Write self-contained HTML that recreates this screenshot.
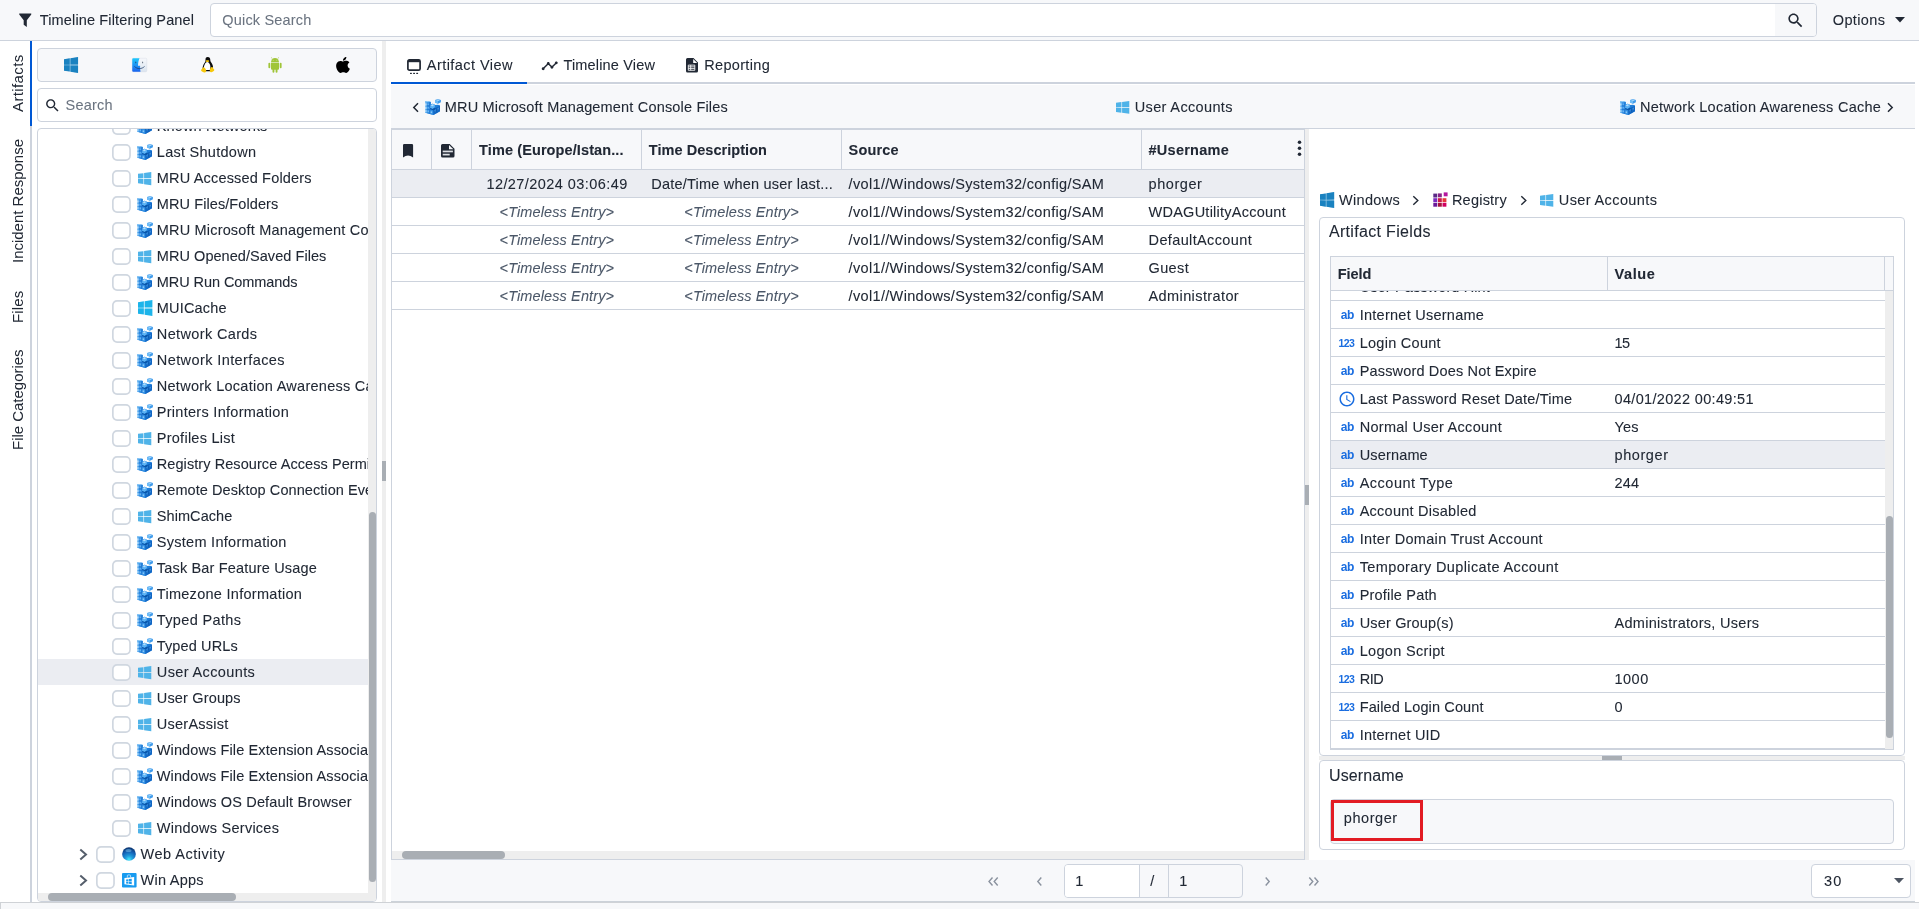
<!DOCTYPE html>
<html lang="en"><head><meta charset="utf-8"><title>Timeline</title>
<style>
*{box-sizing:border-box}
html,body{margin:0;padding:0}
body{will-change:transform;width:1919px;height:909px;overflow:hidden;background:#fff;position:relative;font-family:"Liberation Sans",sans-serif;font-size:14.5px;color:#212834}
.a{position:absolute}
.ic{position:absolute;display:block;overflow:visible}
.t{position:absolute;white-space:nowrap;line-height:20px;height:20px;-webkit-text-stroke:0.080px #212834}
.ph,.it{-webkit-text-stroke:0.060px currentColor}
.b{font-weight:bold}
.box{position:absolute;border:1px solid #cdd3dd;border-radius:4px}
.cb{position:absolute;width:18.900px;height:16.900px;border:1.800px solid #d0d6df;border-radius:5px;background:#fff}
.row{position:absolute;left:0;width:330px;height:26px;overflow:hidden}
.hl{position:absolute;height:1px;background:#cdd3dd}
.vl{position:absolute;width:1px;background:#cdd3dd}
.it{font-style:italic;color:#4b5768}
.ty{position:absolute;color:#1a6de0;font-weight:bold;font-size:12px;line-height:20px;height:20px;letter-spacing:-0.350px;white-space:nowrap}
.vt{position:absolute;left:1.500px;width:32px;font-size:15px;writing-mode:vertical-rl;transform:rotate(180deg);text-align:center;line-height:31px;white-space:nowrap}
.ph{color:#6b7480}
</style></head><body>

<div class="a" style="left:0;top:0;width:1919px;height:41px;background:#f7f8fa;border-bottom:1px solid #cdd3dd"></div>
<svg class="ic" style="left:19px;top:12.500px" width="12.500" height="14.500" viewBox="0 0 16 18"><path d="M0.300 0.500h15.400v1.200L10 9V17.600L6 14.600V9L0.300 1.700z" fill="#212834"/></svg>
<div class="t" style="left:39.8px;top:10px;letter-spacing:0.14px;">Timeline Filtering Panel</div>
<div class="box" style="left:210px;top:3px;width:1607px;height:34px;background:#fff;overflow:hidden"><div class="a" style="right:0;top:0;width:41px;height:32px;background:#f7f8fa"></div></div>
<div class="t ph" style="left:222.3px;top:10px;letter-spacing:0.178px;">Quick Search</div>
<svg class="ic" style="left:1786px;top:10.5px" width="19" height="19" viewBox="0 0 24 24"><path d="M15.500 14h-.790l-.280-.270C15.410 12.590 16 11.110 16 9.500 16 5.910 13.090 3 9.500 3S3 5.910 3 9.500 5.910 16 9.500 16c1.610 0 3.090-.590 4.230-1.570l.270.280v.790l5 4.990L20.490 19l-4.990-5zm-6 0C7.010 14 5 11.990 5 9.500S7.010 5 9.500 5 14 7.010 14 9.500 11.990 14 9.500 14z" fill="#212834"/></svg>
<div class="t" style="left:1832.8px;top:10px;letter-spacing:0.353px;">Options</div>
<svg class="ic" style="left:1895px;top:17px" width="10" height="5.500" viewBox="0 0 10 5.500"><path d="M0 0h10L5 5.500z" fill="#212834"/></svg>
<div class="a" style="left:30px;top:41px;width:2px;height:861px;background:#cdd3dd"></div>
<div class="a" style="left:30px;top:41px;width:2px;height:85px;background:#0058d4"></div>
<div class="vt" style="top:41px;height:85px;letter-spacing:0.389px">Artifacts</div>
<div class="vt" style="top:126px;height:151px;letter-spacing:-0.016px">Incident Response</div>
<div class="vt" style="top:277px;height:60px;letter-spacing:0.157px">Files</div>
<div class="vt" style="top:337px;height:126px;letter-spacing:-0.021px">File Categories</div>
<div class="box" style="left:37px;top:48px;width:340px;height:34px;background:#f7f8fa"></div>
<svg class="ic " style="left:63.9px;top:56.9px" width="14.2" height="16" viewBox="0 0 88 88" preserveAspectRatio="none"><path fill="#a3cfe8" d="M1 13.200L86.500 1V86.600L1 74.700z"/><path fill="#1a82c0" d="M0 12.402l35.687-4.86.016 34.423-35.67.203zm35.67 33.529l.028 34.453L.028 75.48.026 45.7zm4.326-39.025L87.314 0v41.527l-47.318.376zm47.329 39.349l-.011 41.34-47.318-6.678-.066-34.739z"/></svg>
<svg class="ic" style="left:131.5px;top:58px" width="15" height="14" viewBox="0 0 30 28"><defs><linearGradient id="fg" x1="0" y1="0" x2="0" y2="1"><stop offset="0" stop-color="#1ec8fb"/><stop offset="1" stop-color="#1a63ee"/></linearGradient><linearGradient id="fw" x1="0" y1="0" x2="0" y2="1"><stop offset="0" stop-color="#f6f8fb"/><stop offset="1" stop-color="#dbe5ef"/></linearGradient></defs><rect x="0.5" y="0.5" width="29" height="27" rx="2" fill="url(#fw)" stroke="#c9d1da" stroke-width="0.6"/><path d="M2.5 0.5H15c-2 4.5-2.8 9.5-3 15h4.2c-0.2 4 0 8 0.8 12H2.5a2 2 0 0 1-2-2V2.500a2 2 0 0 1 2-2z" fill="url(#fg)"/><rect x="6.8" y="7" width="1.6" height="3.6" rx="0.8" fill="#1c3a66"/><rect x="20.6" y="7" width="1.6" height="3.6" rx="0.8" fill="#3b4a5c"/><path d="M5.5 17.500c5 5 14 5 19 0" fill="none" stroke="#1c3a66" stroke-width="1.5" stroke-linecap="round"/></svg>
<svg class="ic" style="left:200.5px;top:56.8px" width="13.400" height="15.800" viewBox="0 0 13.400 15.800"><path d="M6.700 0.100C5 0.100 4.400 1.400 4.500 3c0.100 1.300-0.400 2-1.200 3.200C2.200 7.900 1.500 9.800 1.600 12.200L3.500 14.300H9.500L11.800 12.500c0.600-2 0.200-4.300-0.900-6.100C10 5 9.300 4.300 9.300 3 9.300 1.300 8.500 0.100 6.700 0.100z" fill="#0c0c0c"/><path d="M6.300 5C5 5 4.300 6.200 3.700 7.500 2.900 9.200 2.500 11.400 3 13h5.800c0.800-2 0.800-3.800 0.100-5.500C8.300 6.100 7.500 5 6.300 5z" fill="#fff"/><path d="M5 3.500c0.700-0.500 2.200-0.500 2.900 0 0.400 0.300 0.200 0.900-0.200 1.200-0.700 0.500-1.800 0.500-2.500 0-0.400-0.300-0.600-0.900-0.200-1.200z" fill="#f7c80a"/><path d="M0.100 13.600c-0.300-0.900 0.600-1.100 1-1.800 0.500-0.800 0.800-1.700 1.800-1.500 0.900 0.200 1.700 1.800 2.200 2.700 0.500 1.100-0.200 2.300-1.400 2.400-1.200 0.100-3.200-0.700-3.600-1.800z" fill="#f7c80a"/><path d="M13.300 13.200c0.300-0.800-0.600-1.200-1-1.800-0.400-0.600-0.300-1.300-1.200-1.400-1-0.100-1.700 0.700-2 1.900-0.200 1-0.700 2.500 0.400 3.100 0.900 0.600 1.800-0.100 2.500-0.600 0.600-0.400 1.100-0.600 1.300-1.200z" fill="#f7c80a"/></svg>
<svg class="ic" style="left:268px;top:57px" width="14" height="16" viewBox="0 0 28 32"><path d="M6 10.500a8 8.500 0 0 1 16 0z" fill="#a0c538"/><path d="M8.300 3.200L6.800 0.800M19.700 3.200L21.200 0.800" stroke="#a0c538" stroke-width="0.900" stroke-linecap="round"/><circle cx="10.400" cy="6.400" r="0.900" fill="#d8ea9d"/><circle cx="17.600" cy="6.400" r="0.900" fill="#d8ea9d"/><path d="M6 11.700h16v11.800a2 2 0 0 1-2 2H8a2 2 0 0 1-2-2z" fill="#a0c538"/><rect x="0.800" y="11.400" width="3.800" height="11" rx="1.900" fill="#a0c538"/><rect x="23.400" y="11.400" width="3.800" height="11" rx="1.900" fill="#a0c538"/><rect x="9" y="22" width="3.800" height="9.600" rx="1.900" fill="#a0c538"/><rect x="15.200" y="22" width="3.800" height="9.600" rx="1.900" fill="#a0c538"/></svg>
<svg class="ic" style="left:336px;top:57px" width="14" height="16" viewBox="2 0 20 24" preserveAspectRatio="none"><path d="M12.152 6.896c-.948 0-2.415-1.078-3.960-1.040-2.040.027-3.910 1.183-4.961 3.014-2.117 3.675-.546 9.103 1.519 12.090 1.013 1.454 2.208 3.090 3.792 3.039 1.520-.065 2.090-.987 3.935-.987 1.831 0 2.350.987 3.960.948 1.637-.026 2.676-1.480 3.676-2.948 1.156-1.688 1.636-3.325 1.662-3.415-.039-.013-3.182-1.221-3.220-4.857-.026-3.040 2.480-4.494 2.597-4.559-1.429-2.090-3.623-2.324-4.390-2.376-2-.156-3.675 1.090-4.610 1.090zM15.530 3.830c.843-1.012 1.400-2.427 1.245-3.830-1.207.052-2.662.805-3.532 1.818-.780.896-1.454 2.338-1.273 3.714 1.338.104 2.715-.688 3.559-1.701" fill="#000"/></svg>
<div class="box" style="left:37px;top:88px;width:340px;height:34px;background:#fff"></div>
<svg class="ic" style="left:43.5px;top:96.5px" width="17" height="17" viewBox="0 0 24 24"><path d="M15.500 14h-.790l-.280-.270C15.410 12.590 16 11.110 16 9.500 16 5.910 13.090 3 9.500 3S3 5.910 3 9.500 5.910 16 9.500 16c1.610 0 3.090-.590 4.230-1.570l.270.280v.790l5 4.990L20.490 19l-4.990-5zm-6 0C7.010 14 5 11.990 5 9.500S7.010 5 9.500 5 14 7.010 14 9.500 11.990 14 9.500 14z" fill="#212834"/></svg>
<div class="t ph" style="left:65.6px;top:95px;letter-spacing:0.209px;">Search</div>
<div class="box" style="left:37px;top:128px;width:340px;height:774px;background:#fff;overflow:hidden">
<div class="row" style="top:-16px;"><svg class="ic" style="left:74px;top:4.9px" width="18.900" height="16.900" viewBox="0 0 18.900 16.900"><rect x="0.850" y="0.850" width="17.200" height="15.200" rx="4.200" fill="#fff" stroke="#d0d7e0" stroke-width="1.700"/></svg><svg class="ic" style="left:99px;top:5px" width="16" height="16" viewBox="0 0 16 16"><polygon points="0.100,2.600 2.900,2.100 6,2.900 6,5.300 7.800,4.700 10.500,5.900 13,5.700 15,6.600 15,12.300 8.400,16 0.100,13.700" fill="#1f7fda"/><polygon points="0.100,2.600 1.700,3.200 1.700,14.100 0.100,13.700" fill="#7cc2f7"/><polygon points="1.700,3.200 6,2.900 6,8.800 8.400,10.200 8.400,16 1.700,14.100" fill="#338fe3"/><polygon points="8.400,10.200 15,6.600 15,12.300 8.400,16" fill="#1268c6"/><polygon points="0.100,2.600 2.900,2.100 6,2.900 1.700,3.200" fill="#9ad2fa"/><polygon points="4.900,6.200 7.700,4.700 9.900,5.900 9.900,8.400 7.600,10 4.900,8.700" fill="#5cb3f5"/><polygon points="5.500,6.200 7.600,5.200 9.200,6 7.400,7.200" fill="#b5defc"/><polygon points="4.900,8.700 7.600,10 9.900,8.400 10.900,9.700 8.400,11.400 5.400,10.300" fill="#0a55a8"/><polygon points="10,1.100 13,0 15.900,0.900 15.900,3.300 13,4.700 10,3.600" fill="#3f9aea"/><polygon points="10.500,1.200 13,0.400 15.200,1.100 13,2" fill="#b5defc"/><polygon points="10,1.100 13,2 13,4.700 10,3.600" fill="#6dbcf7"/><rect x="0.400" y="4.400" width="1" height="2.200" fill="#eaf6ff"/><rect x="0.400" y="7.800" width="1" height="2.200" fill="#d9eefe"/><rect x="0.400" y="11.100" width="1" height="2" fill="#c3e3fb"/><rect x="2.500" y="4.500" width="1.400" height="1.600" fill="#5fb0f2"/><rect x="2.500" y="8" width="1.400" height="1.600" fill="#5fb0f2"/><rect x="2.500" y="11.500" width="1.400" height="1.600" fill="#6fbbf5"/><rect x="5.600" y="12.400" width="1.500" height="1.700" fill="#86c8f8"/><path d="M1.700 6.900H5.500M1.700 10.400H6.500M4.700 3.100V8.600M4.700 10.400V15" stroke="#1566c4" stroke-width="0.500" fill="none"/><polygon points="9.400,11.200 11,10.300 11,12.200 9.400,13.100" fill="#3f94e4"/><polygon points="12.300,9.500 14,8.600 14,10.500 12.300,11.400" fill="#3f94e4"/><path d="M11.700 8.400V14.100M8.400 13L15 9.400" stroke="#0a55a8" stroke-width="0.450" fill="none"/></svg><div class="t" style="left:118.8px;top:3px;letter-spacing:0.132px;">Known Networks</div></div>
<div class="row" style="top:10px;"><svg class="ic" style="left:74px;top:4.9px" width="18.900" height="16.900" viewBox="0 0 18.900 16.900"><rect x="0.850" y="0.850" width="17.200" height="15.200" rx="4.200" fill="#fff" stroke="#d0d7e0" stroke-width="1.700"/></svg><svg class="ic" style="left:99px;top:5px" width="16" height="16" viewBox="0 0 16 16"><polygon points="0.100,2.600 2.900,2.100 6,2.900 6,5.300 7.800,4.700 10.500,5.900 13,5.700 15,6.600 15,12.300 8.400,16 0.100,13.700" fill="#1f7fda"/><polygon points="0.100,2.600 1.700,3.200 1.700,14.100 0.100,13.700" fill="#7cc2f7"/><polygon points="1.700,3.200 6,2.900 6,8.800 8.400,10.200 8.400,16 1.700,14.100" fill="#338fe3"/><polygon points="8.400,10.200 15,6.600 15,12.300 8.400,16" fill="#1268c6"/><polygon points="0.100,2.600 2.900,2.100 6,2.900 1.700,3.200" fill="#9ad2fa"/><polygon points="4.900,6.200 7.700,4.700 9.900,5.900 9.900,8.400 7.600,10 4.900,8.700" fill="#5cb3f5"/><polygon points="5.500,6.200 7.600,5.200 9.200,6 7.400,7.200" fill="#b5defc"/><polygon points="4.900,8.700 7.600,10 9.900,8.400 10.900,9.700 8.400,11.400 5.400,10.300" fill="#0a55a8"/><polygon points="10,1.100 13,0 15.900,0.900 15.900,3.300 13,4.700 10,3.600" fill="#3f9aea"/><polygon points="10.500,1.200 13,0.400 15.200,1.100 13,2" fill="#b5defc"/><polygon points="10,1.100 13,2 13,4.700 10,3.600" fill="#6dbcf7"/><rect x="0.400" y="4.400" width="1" height="2.200" fill="#eaf6ff"/><rect x="0.400" y="7.800" width="1" height="2.200" fill="#d9eefe"/><rect x="0.400" y="11.100" width="1" height="2" fill="#c3e3fb"/><rect x="2.500" y="4.500" width="1.400" height="1.600" fill="#5fb0f2"/><rect x="2.500" y="8" width="1.400" height="1.600" fill="#5fb0f2"/><rect x="2.500" y="11.500" width="1.400" height="1.600" fill="#6fbbf5"/><rect x="5.600" y="12.400" width="1.500" height="1.700" fill="#86c8f8"/><path d="M1.700 6.900H5.500M1.700 10.400H6.500M4.700 3.100V8.600M4.700 10.400V15" stroke="#1566c4" stroke-width="0.500" fill="none"/><polygon points="9.400,11.200 11,10.300 11,12.200 9.400,13.100" fill="#3f94e4"/><polygon points="12.300,9.500 14,8.600 14,10.500 12.300,11.400" fill="#3f94e4"/><path d="M11.700 8.400V14.100M8.400 13L15 9.400" stroke="#0a55a8" stroke-width="0.450" fill="none"/></svg><div class="t" style="left:118.8px;top:3px;letter-spacing:0.272px;">Last Shutdown</div></div>
<div class="row" style="top:36px;"><svg class="ic" style="left:74px;top:4.9px" width="18.900" height="16.900" viewBox="0 0 18.900 16.900"><rect x="0.850" y="0.850" width="17.200" height="15.200" rx="4.200" fill="#fff" stroke="#d0d7e0" stroke-width="1.700"/></svg><svg class="ic " style="left:99.8px;top:6.85px" width="13.4" height="13.2" viewBox="0 0 88 88" preserveAspectRatio="none"><path fill="#4fb3e8" d="M0 12.402l35.687-4.86.016 34.423-35.67.203zm35.67 33.529l.028 34.453L.028 75.48.026 45.7zm4.326-39.025L87.314 0v41.527l-47.318.376zm47.329 39.349l-.011 41.34-47.318-6.678-.066-34.739z"/></svg><div class="t" style="left:118.8px;top:3px;letter-spacing:0.168px;">MRU Accessed Folders</div></div>
<div class="row" style="top:62px;"><svg class="ic" style="left:74px;top:4.9px" width="18.900" height="16.900" viewBox="0 0 18.900 16.900"><rect x="0.850" y="0.850" width="17.200" height="15.200" rx="4.200" fill="#fff" stroke="#d0d7e0" stroke-width="1.700"/></svg><svg class="ic" style="left:99px;top:5px" width="16" height="16" viewBox="0 0 16 16"><polygon points="0.100,2.600 2.900,2.100 6,2.900 6,5.300 7.800,4.700 10.500,5.900 13,5.700 15,6.600 15,12.300 8.400,16 0.100,13.700" fill="#1f7fda"/><polygon points="0.100,2.600 1.700,3.200 1.700,14.100 0.100,13.700" fill="#7cc2f7"/><polygon points="1.700,3.200 6,2.900 6,8.800 8.400,10.200 8.400,16 1.700,14.100" fill="#338fe3"/><polygon points="8.400,10.200 15,6.600 15,12.300 8.400,16" fill="#1268c6"/><polygon points="0.100,2.600 2.900,2.100 6,2.900 1.700,3.200" fill="#9ad2fa"/><polygon points="4.900,6.200 7.700,4.700 9.900,5.900 9.900,8.400 7.600,10 4.900,8.700" fill="#5cb3f5"/><polygon points="5.500,6.200 7.600,5.200 9.200,6 7.400,7.200" fill="#b5defc"/><polygon points="4.900,8.700 7.600,10 9.900,8.400 10.900,9.700 8.400,11.400 5.400,10.300" fill="#0a55a8"/><polygon points="10,1.100 13,0 15.900,0.900 15.900,3.300 13,4.700 10,3.600" fill="#3f9aea"/><polygon points="10.500,1.200 13,0.400 15.200,1.100 13,2" fill="#b5defc"/><polygon points="10,1.100 13,2 13,4.700 10,3.600" fill="#6dbcf7"/><rect x="0.400" y="4.400" width="1" height="2.200" fill="#eaf6ff"/><rect x="0.400" y="7.800" width="1" height="2.200" fill="#d9eefe"/><rect x="0.400" y="11.100" width="1" height="2" fill="#c3e3fb"/><rect x="2.500" y="4.500" width="1.400" height="1.600" fill="#5fb0f2"/><rect x="2.500" y="8" width="1.400" height="1.600" fill="#5fb0f2"/><rect x="2.500" y="11.500" width="1.400" height="1.600" fill="#6fbbf5"/><rect x="5.600" y="12.400" width="1.500" height="1.700" fill="#86c8f8"/><path d="M1.700 6.900H5.500M1.700 10.400H6.500M4.700 3.100V8.600M4.700 10.400V15" stroke="#1566c4" stroke-width="0.500" fill="none"/><polygon points="9.400,11.200 11,10.300 11,12.200 9.400,13.100" fill="#3f94e4"/><polygon points="12.300,9.500 14,8.600 14,10.500 12.300,11.400" fill="#3f94e4"/><path d="M11.700 8.400V14.100M8.400 13L15 9.400" stroke="#0a55a8" stroke-width="0.450" fill="none"/></svg><div class="t" style="left:118.8px;top:3px;letter-spacing:0.085px;">MRU Files/Folders</div></div>
<div class="row" style="top:88px;"><svg class="ic" style="left:74px;top:4.9px" width="18.900" height="16.900" viewBox="0 0 18.900 16.900"><rect x="0.850" y="0.850" width="17.200" height="15.200" rx="4.200" fill="#fff" stroke="#d0d7e0" stroke-width="1.700"/></svg><svg class="ic" style="left:99px;top:5px" width="16" height="16" viewBox="0 0 16 16"><polygon points="0.100,2.600 2.900,2.100 6,2.900 6,5.300 7.800,4.700 10.500,5.900 13,5.700 15,6.600 15,12.300 8.400,16 0.100,13.700" fill="#1f7fda"/><polygon points="0.100,2.600 1.700,3.200 1.700,14.100 0.100,13.700" fill="#7cc2f7"/><polygon points="1.700,3.200 6,2.900 6,8.800 8.400,10.200 8.400,16 1.700,14.100" fill="#338fe3"/><polygon points="8.400,10.200 15,6.600 15,12.300 8.400,16" fill="#1268c6"/><polygon points="0.100,2.600 2.900,2.100 6,2.900 1.700,3.200" fill="#9ad2fa"/><polygon points="4.900,6.200 7.700,4.700 9.900,5.900 9.900,8.400 7.600,10 4.900,8.700" fill="#5cb3f5"/><polygon points="5.500,6.200 7.600,5.200 9.200,6 7.400,7.200" fill="#b5defc"/><polygon points="4.900,8.700 7.600,10 9.900,8.400 10.900,9.700 8.400,11.400 5.400,10.300" fill="#0a55a8"/><polygon points="10,1.100 13,0 15.900,0.900 15.900,3.300 13,4.700 10,3.600" fill="#3f9aea"/><polygon points="10.500,1.200 13,0.400 15.200,1.100 13,2" fill="#b5defc"/><polygon points="10,1.100 13,2 13,4.700 10,3.600" fill="#6dbcf7"/><rect x="0.400" y="4.400" width="1" height="2.200" fill="#eaf6ff"/><rect x="0.400" y="7.800" width="1" height="2.200" fill="#d9eefe"/><rect x="0.400" y="11.100" width="1" height="2" fill="#c3e3fb"/><rect x="2.500" y="4.500" width="1.400" height="1.600" fill="#5fb0f2"/><rect x="2.500" y="8" width="1.400" height="1.600" fill="#5fb0f2"/><rect x="2.500" y="11.500" width="1.400" height="1.600" fill="#6fbbf5"/><rect x="5.600" y="12.400" width="1.500" height="1.700" fill="#86c8f8"/><path d="M1.700 6.900H5.500M1.700 10.400H6.500M4.700 3.100V8.600M4.700 10.400V15" stroke="#1566c4" stroke-width="0.500" fill="none"/><polygon points="9.400,11.200 11,10.300 11,12.200 9.400,13.100" fill="#3f94e4"/><polygon points="12.300,9.500 14,8.600 14,10.500 12.300,11.400" fill="#3f94e4"/><path d="M11.700 8.400V14.100M8.400 13L15 9.400" stroke="#0a55a8" stroke-width="0.450" fill="none"/></svg><div class="t" style="left:118.8px;top:3px;letter-spacing:0.176px;">MRU Microsoft Management Console Files</div></div>
<div class="row" style="top:114px;"><svg class="ic" style="left:74px;top:4.9px" width="18.900" height="16.900" viewBox="0 0 18.900 16.900"><rect x="0.850" y="0.850" width="17.200" height="15.200" rx="4.200" fill="#fff" stroke="#d0d7e0" stroke-width="1.700"/></svg><svg class="ic " style="left:99.8px;top:6.85px" width="13.4" height="13.2" viewBox="0 0 88 88" preserveAspectRatio="none"><path fill="#4fb3e8" d="M0 12.402l35.687-4.86.016 34.423-35.67.203zm35.67 33.529l.028 34.453L.028 75.48.026 45.7zm4.326-39.025L87.314 0v41.527l-47.318.376zm47.329 39.349l-.011 41.34-47.318-6.678-.066-34.739z"/></svg><div class="t" style="left:118.8px;top:3px;letter-spacing:0.051px;">MRU Opened/Saved Files</div></div>
<div class="row" style="top:140px;"><svg class="ic" style="left:74px;top:4.9px" width="18.900" height="16.900" viewBox="0 0 18.900 16.900"><rect x="0.850" y="0.850" width="17.200" height="15.200" rx="4.200" fill="#fff" stroke="#d0d7e0" stroke-width="1.700"/></svg><svg class="ic" style="left:99px;top:5px" width="16" height="16" viewBox="0 0 16 16"><polygon points="0.100,2.600 2.900,2.100 6,2.900 6,5.300 7.800,4.700 10.500,5.900 13,5.700 15,6.600 15,12.300 8.400,16 0.100,13.700" fill="#1f7fda"/><polygon points="0.100,2.600 1.700,3.200 1.700,14.100 0.100,13.700" fill="#7cc2f7"/><polygon points="1.700,3.200 6,2.900 6,8.800 8.400,10.200 8.400,16 1.700,14.100" fill="#338fe3"/><polygon points="8.400,10.200 15,6.600 15,12.300 8.400,16" fill="#1268c6"/><polygon points="0.100,2.600 2.900,2.100 6,2.900 1.700,3.200" fill="#9ad2fa"/><polygon points="4.900,6.200 7.700,4.700 9.900,5.900 9.900,8.400 7.600,10 4.900,8.700" fill="#5cb3f5"/><polygon points="5.500,6.200 7.600,5.200 9.200,6 7.400,7.200" fill="#b5defc"/><polygon points="4.900,8.700 7.600,10 9.900,8.400 10.900,9.700 8.400,11.400 5.400,10.300" fill="#0a55a8"/><polygon points="10,1.100 13,0 15.900,0.900 15.900,3.300 13,4.700 10,3.600" fill="#3f9aea"/><polygon points="10.500,1.200 13,0.400 15.200,1.100 13,2" fill="#b5defc"/><polygon points="10,1.100 13,2 13,4.700 10,3.600" fill="#6dbcf7"/><rect x="0.400" y="4.400" width="1" height="2.200" fill="#eaf6ff"/><rect x="0.400" y="7.800" width="1" height="2.200" fill="#d9eefe"/><rect x="0.400" y="11.100" width="1" height="2" fill="#c3e3fb"/><rect x="2.500" y="4.500" width="1.400" height="1.600" fill="#5fb0f2"/><rect x="2.500" y="8" width="1.400" height="1.600" fill="#5fb0f2"/><rect x="2.500" y="11.500" width="1.400" height="1.600" fill="#6fbbf5"/><rect x="5.600" y="12.400" width="1.500" height="1.700" fill="#86c8f8"/><path d="M1.700 6.900H5.500M1.700 10.400H6.500M4.700 3.100V8.600M4.700 10.400V15" stroke="#1566c4" stroke-width="0.500" fill="none"/><polygon points="9.400,11.200 11,10.300 11,12.200 9.400,13.100" fill="#3f94e4"/><polygon points="12.300,9.500 14,8.600 14,10.500 12.300,11.400" fill="#3f94e4"/><path d="M11.700 8.400V14.100M8.400 13L15 9.400" stroke="#0a55a8" stroke-width="0.450" fill="none"/></svg><div class="t" style="left:118.8px;top:3px;letter-spacing:-0.069px;">MRU Run Commands</div></div>
<div class="row" style="top:166px;"><svg class="ic" style="left:74px;top:4.9px" width="18.900" height="16.900" viewBox="0 0 18.900 16.900"><rect x="0.850" y="0.850" width="17.200" height="15.200" rx="4.200" fill="#fff" stroke="#d0d7e0" stroke-width="1.700"/></svg><svg class="ic " style="left:99.5px;top:5px" width="14.5" height="16" viewBox="0 0 88 88" preserveAspectRatio="none"><path fill="#1cb4ea" d="M0 12.402l35.687-4.86.016 34.423-35.67.203zm35.67 33.529l.028 34.453L.028 75.48.026 45.7zm4.326-39.025L87.314 0v41.527l-47.318.376zm47.329 39.349l-.011 41.34-47.318-6.678-.066-34.739z"/></svg><div class="t" style="left:118.8px;top:3px;letter-spacing:0.171px;">MUICache</div></div>
<div class="row" style="top:192px;"><svg class="ic" style="left:74px;top:4.9px" width="18.900" height="16.900" viewBox="0 0 18.900 16.900"><rect x="0.850" y="0.850" width="17.200" height="15.200" rx="4.200" fill="#fff" stroke="#d0d7e0" stroke-width="1.700"/></svg><svg class="ic" style="left:99px;top:5px" width="16" height="16" viewBox="0 0 16 16"><polygon points="0.100,2.600 2.900,2.100 6,2.900 6,5.300 7.800,4.700 10.500,5.900 13,5.700 15,6.600 15,12.300 8.400,16 0.100,13.700" fill="#1f7fda"/><polygon points="0.100,2.600 1.700,3.200 1.700,14.100 0.100,13.700" fill="#7cc2f7"/><polygon points="1.700,3.200 6,2.900 6,8.800 8.400,10.200 8.400,16 1.700,14.100" fill="#338fe3"/><polygon points="8.400,10.200 15,6.600 15,12.300 8.400,16" fill="#1268c6"/><polygon points="0.100,2.600 2.900,2.100 6,2.900 1.700,3.200" fill="#9ad2fa"/><polygon points="4.900,6.200 7.700,4.700 9.900,5.900 9.900,8.400 7.600,10 4.900,8.700" fill="#5cb3f5"/><polygon points="5.500,6.200 7.600,5.200 9.200,6 7.400,7.200" fill="#b5defc"/><polygon points="4.900,8.700 7.600,10 9.900,8.400 10.900,9.700 8.400,11.400 5.400,10.300" fill="#0a55a8"/><polygon points="10,1.100 13,0 15.900,0.900 15.900,3.300 13,4.700 10,3.600" fill="#3f9aea"/><polygon points="10.500,1.200 13,0.400 15.200,1.100 13,2" fill="#b5defc"/><polygon points="10,1.100 13,2 13,4.700 10,3.600" fill="#6dbcf7"/><rect x="0.400" y="4.400" width="1" height="2.200" fill="#eaf6ff"/><rect x="0.400" y="7.800" width="1" height="2.200" fill="#d9eefe"/><rect x="0.400" y="11.100" width="1" height="2" fill="#c3e3fb"/><rect x="2.500" y="4.500" width="1.400" height="1.600" fill="#5fb0f2"/><rect x="2.500" y="8" width="1.400" height="1.600" fill="#5fb0f2"/><rect x="2.500" y="11.500" width="1.400" height="1.600" fill="#6fbbf5"/><rect x="5.600" y="12.400" width="1.500" height="1.700" fill="#86c8f8"/><path d="M1.700 6.900H5.500M1.700 10.400H6.500M4.700 3.100V8.600M4.700 10.400V15" stroke="#1566c4" stroke-width="0.500" fill="none"/><polygon points="9.400,11.200 11,10.300 11,12.200 9.400,13.100" fill="#3f94e4"/><polygon points="12.300,9.500 14,8.600 14,10.500 12.300,11.400" fill="#3f94e4"/><path d="M11.700 8.400V14.100M8.400 13L15 9.400" stroke="#0a55a8" stroke-width="0.450" fill="none"/></svg><div class="t" style="left:118.8px;top:3px;letter-spacing:0.359px;">Network Cards</div></div>
<div class="row" style="top:218px;"><svg class="ic" style="left:74px;top:4.9px" width="18.900" height="16.900" viewBox="0 0 18.900 16.900"><rect x="0.850" y="0.850" width="17.200" height="15.200" rx="4.200" fill="#fff" stroke="#d0d7e0" stroke-width="1.700"/></svg><svg class="ic" style="left:99px;top:5px" width="16" height="16" viewBox="0 0 16 16"><polygon points="0.100,2.600 2.900,2.100 6,2.900 6,5.300 7.800,4.700 10.500,5.900 13,5.700 15,6.600 15,12.300 8.400,16 0.100,13.700" fill="#1f7fda"/><polygon points="0.100,2.600 1.700,3.200 1.700,14.100 0.100,13.700" fill="#7cc2f7"/><polygon points="1.700,3.200 6,2.900 6,8.800 8.400,10.200 8.400,16 1.700,14.100" fill="#338fe3"/><polygon points="8.400,10.200 15,6.600 15,12.300 8.400,16" fill="#1268c6"/><polygon points="0.100,2.600 2.900,2.100 6,2.900 1.700,3.200" fill="#9ad2fa"/><polygon points="4.900,6.200 7.700,4.700 9.900,5.900 9.900,8.400 7.600,10 4.900,8.700" fill="#5cb3f5"/><polygon points="5.500,6.200 7.600,5.200 9.200,6 7.400,7.200" fill="#b5defc"/><polygon points="4.900,8.700 7.600,10 9.900,8.400 10.900,9.700 8.400,11.400 5.400,10.300" fill="#0a55a8"/><polygon points="10,1.100 13,0 15.900,0.900 15.900,3.300 13,4.700 10,3.600" fill="#3f9aea"/><polygon points="10.500,1.200 13,0.400 15.200,1.100 13,2" fill="#b5defc"/><polygon points="10,1.100 13,2 13,4.700 10,3.600" fill="#6dbcf7"/><rect x="0.400" y="4.400" width="1" height="2.200" fill="#eaf6ff"/><rect x="0.400" y="7.800" width="1" height="2.200" fill="#d9eefe"/><rect x="0.400" y="11.100" width="1" height="2" fill="#c3e3fb"/><rect x="2.500" y="4.500" width="1.400" height="1.600" fill="#5fb0f2"/><rect x="2.500" y="8" width="1.400" height="1.600" fill="#5fb0f2"/><rect x="2.500" y="11.500" width="1.400" height="1.600" fill="#6fbbf5"/><rect x="5.600" y="12.400" width="1.500" height="1.700" fill="#86c8f8"/><path d="M1.700 6.900H5.500M1.700 10.400H6.500M4.700 3.100V8.600M4.700 10.400V15" stroke="#1566c4" stroke-width="0.500" fill="none"/><polygon points="9.400,11.200 11,10.300 11,12.200 9.400,13.100" fill="#3f94e4"/><polygon points="12.300,9.500 14,8.600 14,10.500 12.300,11.400" fill="#3f94e4"/><path d="M11.700 8.400V14.100M8.400 13L15 9.400" stroke="#0a55a8" stroke-width="0.450" fill="none"/></svg><div class="t" style="left:118.8px;top:3px;letter-spacing:0.406px;">Network Interfaces</div></div>
<div class="row" style="top:244px;"><svg class="ic" style="left:74px;top:4.9px" width="18.900" height="16.900" viewBox="0 0 18.900 16.900"><rect x="0.850" y="0.850" width="17.200" height="15.200" rx="4.200" fill="#fff" stroke="#d0d7e0" stroke-width="1.700"/></svg><svg class="ic" style="left:99px;top:5px" width="16" height="16" viewBox="0 0 16 16"><polygon points="0.100,2.600 2.900,2.100 6,2.900 6,5.300 7.800,4.700 10.500,5.900 13,5.700 15,6.600 15,12.300 8.400,16 0.100,13.700" fill="#1f7fda"/><polygon points="0.100,2.600 1.700,3.200 1.700,14.100 0.100,13.700" fill="#7cc2f7"/><polygon points="1.700,3.200 6,2.900 6,8.800 8.400,10.200 8.400,16 1.700,14.100" fill="#338fe3"/><polygon points="8.400,10.200 15,6.600 15,12.300 8.400,16" fill="#1268c6"/><polygon points="0.100,2.600 2.900,2.100 6,2.900 1.700,3.200" fill="#9ad2fa"/><polygon points="4.900,6.200 7.700,4.700 9.900,5.900 9.900,8.400 7.600,10 4.900,8.700" fill="#5cb3f5"/><polygon points="5.500,6.200 7.600,5.200 9.200,6 7.400,7.200" fill="#b5defc"/><polygon points="4.900,8.700 7.600,10 9.900,8.400 10.900,9.700 8.400,11.400 5.400,10.300" fill="#0a55a8"/><polygon points="10,1.100 13,0 15.900,0.900 15.900,3.300 13,4.700 10,3.600" fill="#3f9aea"/><polygon points="10.500,1.200 13,0.400 15.200,1.100 13,2" fill="#b5defc"/><polygon points="10,1.100 13,2 13,4.700 10,3.600" fill="#6dbcf7"/><rect x="0.400" y="4.400" width="1" height="2.200" fill="#eaf6ff"/><rect x="0.400" y="7.800" width="1" height="2.200" fill="#d9eefe"/><rect x="0.400" y="11.100" width="1" height="2" fill="#c3e3fb"/><rect x="2.500" y="4.500" width="1.400" height="1.600" fill="#5fb0f2"/><rect x="2.500" y="8" width="1.400" height="1.600" fill="#5fb0f2"/><rect x="2.500" y="11.500" width="1.400" height="1.600" fill="#6fbbf5"/><rect x="5.600" y="12.400" width="1.500" height="1.700" fill="#86c8f8"/><path d="M1.700 6.900H5.500M1.700 10.400H6.500M4.700 3.100V8.600M4.700 10.400V15" stroke="#1566c4" stroke-width="0.500" fill="none"/><polygon points="9.400,11.200 11,10.300 11,12.200 9.400,13.100" fill="#3f94e4"/><polygon points="12.300,9.500 14,8.600 14,10.500 12.300,11.400" fill="#3f94e4"/><path d="M11.700 8.400V14.100M8.400 13L15 9.400" stroke="#0a55a8" stroke-width="0.450" fill="none"/></svg><div class="t" style="left:118.8px;top:3px;letter-spacing:0.269px;">Network Location Awareness Cache</div></div>
<div class="row" style="top:270px;"><svg class="ic" style="left:74px;top:4.9px" width="18.900" height="16.900" viewBox="0 0 18.900 16.900"><rect x="0.850" y="0.850" width="17.200" height="15.200" rx="4.200" fill="#fff" stroke="#d0d7e0" stroke-width="1.700"/></svg><svg class="ic" style="left:99px;top:5px" width="16" height="16" viewBox="0 0 16 16"><polygon points="0.100,2.600 2.900,2.100 6,2.900 6,5.300 7.800,4.700 10.500,5.900 13,5.700 15,6.600 15,12.300 8.400,16 0.100,13.700" fill="#1f7fda"/><polygon points="0.100,2.600 1.700,3.200 1.700,14.100 0.100,13.700" fill="#7cc2f7"/><polygon points="1.700,3.200 6,2.900 6,8.800 8.400,10.200 8.400,16 1.700,14.100" fill="#338fe3"/><polygon points="8.400,10.200 15,6.600 15,12.300 8.400,16" fill="#1268c6"/><polygon points="0.100,2.600 2.900,2.100 6,2.900 1.700,3.200" fill="#9ad2fa"/><polygon points="4.900,6.200 7.700,4.700 9.900,5.900 9.900,8.400 7.600,10 4.900,8.700" fill="#5cb3f5"/><polygon points="5.500,6.200 7.600,5.200 9.200,6 7.400,7.200" fill="#b5defc"/><polygon points="4.900,8.700 7.600,10 9.900,8.400 10.900,9.700 8.400,11.400 5.400,10.300" fill="#0a55a8"/><polygon points="10,1.100 13,0 15.900,0.900 15.900,3.300 13,4.700 10,3.600" fill="#3f9aea"/><polygon points="10.500,1.200 13,0.400 15.200,1.100 13,2" fill="#b5defc"/><polygon points="10,1.100 13,2 13,4.700 10,3.600" fill="#6dbcf7"/><rect x="0.400" y="4.400" width="1" height="2.200" fill="#eaf6ff"/><rect x="0.400" y="7.800" width="1" height="2.200" fill="#d9eefe"/><rect x="0.400" y="11.100" width="1" height="2" fill="#c3e3fb"/><rect x="2.500" y="4.500" width="1.400" height="1.600" fill="#5fb0f2"/><rect x="2.500" y="8" width="1.400" height="1.600" fill="#5fb0f2"/><rect x="2.500" y="11.500" width="1.400" height="1.600" fill="#6fbbf5"/><rect x="5.600" y="12.400" width="1.500" height="1.700" fill="#86c8f8"/><path d="M1.700 6.900H5.500M1.700 10.400H6.500M4.700 3.100V8.600M4.700 10.400V15" stroke="#1566c4" stroke-width="0.500" fill="none"/><polygon points="9.400,11.200 11,10.300 11,12.200 9.400,13.100" fill="#3f94e4"/><polygon points="12.300,9.500 14,8.600 14,10.500 12.300,11.400" fill="#3f94e4"/><path d="M11.700 8.400V14.100M8.400 13L15 9.400" stroke="#0a55a8" stroke-width="0.450" fill="none"/></svg><div class="t" style="left:118.8px;top:3px;letter-spacing:0.283px;">Printers Information</div></div>
<div class="row" style="top:296px;"><svg class="ic" style="left:74px;top:4.9px" width="18.900" height="16.900" viewBox="0 0 18.900 16.900"><rect x="0.850" y="0.850" width="17.200" height="15.200" rx="4.200" fill="#fff" stroke="#d0d7e0" stroke-width="1.700"/></svg><svg class="ic " style="left:99.8px;top:6.85px" width="13.4" height="13.2" viewBox="0 0 88 88" preserveAspectRatio="none"><path fill="#4fb3e8" d="M0 12.402l35.687-4.86.016 34.423-35.67.203zm35.67 33.529l.028 34.453L.028 75.48.026 45.7zm4.326-39.025L87.314 0v41.527l-47.318.376zm47.329 39.349l-.011 41.34-47.318-6.678-.066-34.739z"/></svg><div class="t" style="left:118.8px;top:3px;letter-spacing:0.254px;">Profiles List</div></div>
<div class="row" style="top:322px;"><svg class="ic" style="left:74px;top:4.9px" width="18.900" height="16.900" viewBox="0 0 18.900 16.900"><rect x="0.850" y="0.850" width="17.200" height="15.200" rx="4.200" fill="#fff" stroke="#d0d7e0" stroke-width="1.700"/></svg><svg class="ic" style="left:99px;top:5px" width="16" height="16" viewBox="0 0 16 16"><polygon points="0.100,2.600 2.900,2.100 6,2.900 6,5.300 7.800,4.700 10.500,5.900 13,5.700 15,6.600 15,12.300 8.400,16 0.100,13.700" fill="#1f7fda"/><polygon points="0.100,2.600 1.700,3.200 1.700,14.100 0.100,13.700" fill="#7cc2f7"/><polygon points="1.700,3.200 6,2.900 6,8.800 8.400,10.200 8.400,16 1.700,14.100" fill="#338fe3"/><polygon points="8.400,10.200 15,6.600 15,12.300 8.400,16" fill="#1268c6"/><polygon points="0.100,2.600 2.900,2.100 6,2.900 1.700,3.200" fill="#9ad2fa"/><polygon points="4.900,6.200 7.700,4.700 9.900,5.900 9.900,8.400 7.600,10 4.900,8.700" fill="#5cb3f5"/><polygon points="5.500,6.200 7.600,5.200 9.200,6 7.400,7.200" fill="#b5defc"/><polygon points="4.900,8.700 7.600,10 9.900,8.400 10.900,9.700 8.400,11.400 5.400,10.300" fill="#0a55a8"/><polygon points="10,1.100 13,0 15.900,0.900 15.900,3.300 13,4.700 10,3.600" fill="#3f9aea"/><polygon points="10.500,1.200 13,0.400 15.200,1.100 13,2" fill="#b5defc"/><polygon points="10,1.100 13,2 13,4.700 10,3.600" fill="#6dbcf7"/><rect x="0.400" y="4.400" width="1" height="2.200" fill="#eaf6ff"/><rect x="0.400" y="7.800" width="1" height="2.200" fill="#d9eefe"/><rect x="0.400" y="11.100" width="1" height="2" fill="#c3e3fb"/><rect x="2.500" y="4.500" width="1.400" height="1.600" fill="#5fb0f2"/><rect x="2.500" y="8" width="1.400" height="1.600" fill="#5fb0f2"/><rect x="2.500" y="11.500" width="1.400" height="1.600" fill="#6fbbf5"/><rect x="5.600" y="12.400" width="1.500" height="1.700" fill="#86c8f8"/><path d="M1.700 6.900H5.500M1.700 10.400H6.500M4.700 3.100V8.600M4.700 10.400V15" stroke="#1566c4" stroke-width="0.500" fill="none"/><polygon points="9.400,11.200 11,10.300 11,12.200 9.400,13.100" fill="#3f94e4"/><polygon points="12.300,9.500 14,8.600 14,10.500 12.300,11.400" fill="#3f94e4"/><path d="M11.700 8.400V14.100M8.400 13L15 9.400" stroke="#0a55a8" stroke-width="0.450" fill="none"/></svg><div class="t" style="left:118.8px;top:3px;letter-spacing:0.075px;">Registry Resource Access Permissions</div></div>
<div class="row" style="top:348px;"><svg class="ic" style="left:74px;top:4.9px" width="18.900" height="16.900" viewBox="0 0 18.900 16.900"><rect x="0.850" y="0.850" width="17.200" height="15.200" rx="4.200" fill="#fff" stroke="#d0d7e0" stroke-width="1.700"/></svg><svg class="ic" style="left:99px;top:5px" width="16" height="16" viewBox="0 0 16 16"><polygon points="0.100,2.600 2.900,2.100 6,2.900 6,5.300 7.800,4.700 10.500,5.900 13,5.700 15,6.600 15,12.300 8.400,16 0.100,13.700" fill="#1f7fda"/><polygon points="0.100,2.600 1.700,3.200 1.700,14.100 0.100,13.700" fill="#7cc2f7"/><polygon points="1.700,3.200 6,2.900 6,8.800 8.400,10.200 8.400,16 1.700,14.100" fill="#338fe3"/><polygon points="8.400,10.200 15,6.600 15,12.300 8.400,16" fill="#1268c6"/><polygon points="0.100,2.600 2.900,2.100 6,2.900 1.700,3.200" fill="#9ad2fa"/><polygon points="4.900,6.200 7.700,4.700 9.900,5.900 9.900,8.400 7.600,10 4.900,8.700" fill="#5cb3f5"/><polygon points="5.500,6.200 7.600,5.200 9.200,6 7.400,7.200" fill="#b5defc"/><polygon points="4.900,8.700 7.600,10 9.900,8.400 10.900,9.700 8.400,11.400 5.400,10.300" fill="#0a55a8"/><polygon points="10,1.100 13,0 15.900,0.900 15.900,3.300 13,4.700 10,3.600" fill="#3f9aea"/><polygon points="10.500,1.200 13,0.400 15.200,1.100 13,2" fill="#b5defc"/><polygon points="10,1.100 13,2 13,4.700 10,3.600" fill="#6dbcf7"/><rect x="0.400" y="4.400" width="1" height="2.200" fill="#eaf6ff"/><rect x="0.400" y="7.800" width="1" height="2.200" fill="#d9eefe"/><rect x="0.400" y="11.100" width="1" height="2" fill="#c3e3fb"/><rect x="2.500" y="4.500" width="1.400" height="1.600" fill="#5fb0f2"/><rect x="2.500" y="8" width="1.400" height="1.600" fill="#5fb0f2"/><rect x="2.500" y="11.500" width="1.400" height="1.600" fill="#6fbbf5"/><rect x="5.600" y="12.400" width="1.500" height="1.700" fill="#86c8f8"/><path d="M1.700 6.900H5.500M1.700 10.400H6.500M4.700 3.100V8.600M4.700 10.400V15" stroke="#1566c4" stroke-width="0.500" fill="none"/><polygon points="9.400,11.200 11,10.300 11,12.200 9.400,13.100" fill="#3f94e4"/><polygon points="12.300,9.500 14,8.600 14,10.500 12.300,11.400" fill="#3f94e4"/><path d="M11.700 8.400V14.100M8.400 13L15 9.400" stroke="#0a55a8" stroke-width="0.450" fill="none"/></svg><div class="t" style="left:118.8px;top:3px;letter-spacing:0.069px;">Remote Desktop Connection Events</div></div>
<div class="row" style="top:374px;"><svg class="ic" style="left:74px;top:4.9px" width="18.900" height="16.900" viewBox="0 0 18.900 16.900"><rect x="0.850" y="0.850" width="17.200" height="15.200" rx="4.200" fill="#fff" stroke="#d0d7e0" stroke-width="1.700"/></svg><svg class="ic " style="left:99.8px;top:6.85px" width="13.4" height="13.2" viewBox="0 0 88 88" preserveAspectRatio="none"><path fill="#4fb3e8" d="M0 12.402l35.687-4.86.016 34.423-35.67.203zm35.67 33.529l.028 34.453L.028 75.48.026 45.7zm4.326-39.025L87.314 0v41.527l-47.318.376zm47.329 39.349l-.011 41.34-47.318-6.678-.066-34.739z"/></svg><div class="t" style="left:118.8px;top:3px;letter-spacing:0.068px;">ShimCache</div></div>
<div class="row" style="top:400px;"><svg class="ic" style="left:74px;top:4.9px" width="18.900" height="16.900" viewBox="0 0 18.900 16.900"><rect x="0.850" y="0.850" width="17.200" height="15.200" rx="4.200" fill="#fff" stroke="#d0d7e0" stroke-width="1.700"/></svg><svg class="ic" style="left:99px;top:5px" width="16" height="16" viewBox="0 0 16 16"><polygon points="0.100,2.600 2.900,2.100 6,2.900 6,5.300 7.800,4.700 10.500,5.900 13,5.700 15,6.600 15,12.300 8.400,16 0.100,13.700" fill="#1f7fda"/><polygon points="0.100,2.600 1.700,3.200 1.700,14.100 0.100,13.700" fill="#7cc2f7"/><polygon points="1.700,3.200 6,2.900 6,8.800 8.400,10.200 8.400,16 1.700,14.100" fill="#338fe3"/><polygon points="8.400,10.200 15,6.600 15,12.300 8.400,16" fill="#1268c6"/><polygon points="0.100,2.600 2.900,2.100 6,2.900 1.700,3.200" fill="#9ad2fa"/><polygon points="4.900,6.200 7.700,4.700 9.900,5.900 9.900,8.400 7.600,10 4.900,8.700" fill="#5cb3f5"/><polygon points="5.500,6.200 7.600,5.200 9.200,6 7.400,7.200" fill="#b5defc"/><polygon points="4.900,8.700 7.600,10 9.900,8.400 10.900,9.700 8.400,11.400 5.400,10.300" fill="#0a55a8"/><polygon points="10,1.100 13,0 15.900,0.900 15.900,3.300 13,4.700 10,3.600" fill="#3f9aea"/><polygon points="10.500,1.200 13,0.400 15.200,1.100 13,2" fill="#b5defc"/><polygon points="10,1.100 13,2 13,4.700 10,3.600" fill="#6dbcf7"/><rect x="0.400" y="4.400" width="1" height="2.200" fill="#eaf6ff"/><rect x="0.400" y="7.800" width="1" height="2.200" fill="#d9eefe"/><rect x="0.400" y="11.100" width="1" height="2" fill="#c3e3fb"/><rect x="2.500" y="4.500" width="1.400" height="1.600" fill="#5fb0f2"/><rect x="2.500" y="8" width="1.400" height="1.600" fill="#5fb0f2"/><rect x="2.500" y="11.500" width="1.400" height="1.600" fill="#6fbbf5"/><rect x="5.600" y="12.400" width="1.500" height="1.700" fill="#86c8f8"/><path d="M1.700 6.900H5.500M1.700 10.400H6.500M4.700 3.100V8.600M4.700 10.400V15" stroke="#1566c4" stroke-width="0.500" fill="none"/><polygon points="9.400,11.200 11,10.300 11,12.200 9.400,13.100" fill="#3f94e4"/><polygon points="12.300,9.500 14,8.600 14,10.500 12.300,11.400" fill="#3f94e4"/><path d="M11.700 8.400V14.100M8.400 13L15 9.400" stroke="#0a55a8" stroke-width="0.450" fill="none"/></svg><div class="t" style="left:118.8px;top:3px;letter-spacing:0.275px;">System Information</div></div>
<div class="row" style="top:426px;"><svg class="ic" style="left:74px;top:4.9px" width="18.900" height="16.900" viewBox="0 0 18.900 16.900"><rect x="0.850" y="0.850" width="17.200" height="15.200" rx="4.200" fill="#fff" stroke="#d0d7e0" stroke-width="1.700"/></svg><svg class="ic" style="left:99px;top:5px" width="16" height="16" viewBox="0 0 16 16"><polygon points="0.100,2.600 2.900,2.100 6,2.900 6,5.300 7.800,4.700 10.500,5.900 13,5.700 15,6.600 15,12.300 8.400,16 0.100,13.700" fill="#1f7fda"/><polygon points="0.100,2.600 1.700,3.200 1.700,14.100 0.100,13.700" fill="#7cc2f7"/><polygon points="1.700,3.200 6,2.900 6,8.800 8.400,10.200 8.400,16 1.700,14.100" fill="#338fe3"/><polygon points="8.400,10.200 15,6.600 15,12.300 8.400,16" fill="#1268c6"/><polygon points="0.100,2.600 2.900,2.100 6,2.900 1.700,3.200" fill="#9ad2fa"/><polygon points="4.900,6.200 7.700,4.700 9.900,5.900 9.900,8.400 7.600,10 4.900,8.700" fill="#5cb3f5"/><polygon points="5.500,6.200 7.600,5.200 9.200,6 7.400,7.200" fill="#b5defc"/><polygon points="4.900,8.700 7.600,10 9.900,8.400 10.900,9.700 8.400,11.400 5.400,10.300" fill="#0a55a8"/><polygon points="10,1.100 13,0 15.900,0.900 15.900,3.300 13,4.700 10,3.600" fill="#3f9aea"/><polygon points="10.500,1.200 13,0.400 15.200,1.100 13,2" fill="#b5defc"/><polygon points="10,1.100 13,2 13,4.700 10,3.600" fill="#6dbcf7"/><rect x="0.400" y="4.400" width="1" height="2.200" fill="#eaf6ff"/><rect x="0.400" y="7.800" width="1" height="2.200" fill="#d9eefe"/><rect x="0.400" y="11.100" width="1" height="2" fill="#c3e3fb"/><rect x="2.500" y="4.500" width="1.400" height="1.600" fill="#5fb0f2"/><rect x="2.500" y="8" width="1.400" height="1.600" fill="#5fb0f2"/><rect x="2.500" y="11.500" width="1.400" height="1.600" fill="#6fbbf5"/><rect x="5.600" y="12.400" width="1.500" height="1.700" fill="#86c8f8"/><path d="M1.700 6.900H5.500M1.700 10.400H6.500M4.700 3.100V8.600M4.700 10.400V15" stroke="#1566c4" stroke-width="0.500" fill="none"/><polygon points="9.400,11.200 11,10.300 11,12.200 9.400,13.100" fill="#3f94e4"/><polygon points="12.300,9.500 14,8.600 14,10.500 12.300,11.400" fill="#3f94e4"/><path d="M11.700 8.400V14.100M8.400 13L15 9.400" stroke="#0a55a8" stroke-width="0.450" fill="none"/></svg><div class="t" style="left:118.8px;top:3px;letter-spacing:0.173px;">Task Bar Feature Usage</div></div>
<div class="row" style="top:452px;"><svg class="ic" style="left:74px;top:4.9px" width="18.900" height="16.900" viewBox="0 0 18.900 16.900"><rect x="0.850" y="0.850" width="17.200" height="15.200" rx="4.200" fill="#fff" stroke="#d0d7e0" stroke-width="1.700"/></svg><svg class="ic" style="left:99px;top:5px" width="16" height="16" viewBox="0 0 16 16"><polygon points="0.100,2.600 2.900,2.100 6,2.900 6,5.300 7.800,4.700 10.500,5.900 13,5.700 15,6.600 15,12.300 8.400,16 0.100,13.700" fill="#1f7fda"/><polygon points="0.100,2.600 1.700,3.200 1.700,14.100 0.100,13.700" fill="#7cc2f7"/><polygon points="1.700,3.200 6,2.900 6,8.800 8.400,10.200 8.400,16 1.700,14.100" fill="#338fe3"/><polygon points="8.400,10.200 15,6.600 15,12.300 8.400,16" fill="#1268c6"/><polygon points="0.100,2.600 2.900,2.100 6,2.900 1.700,3.200" fill="#9ad2fa"/><polygon points="4.900,6.200 7.700,4.700 9.900,5.900 9.900,8.400 7.600,10 4.900,8.700" fill="#5cb3f5"/><polygon points="5.500,6.200 7.600,5.200 9.200,6 7.400,7.200" fill="#b5defc"/><polygon points="4.900,8.700 7.600,10 9.900,8.400 10.900,9.700 8.400,11.400 5.400,10.300" fill="#0a55a8"/><polygon points="10,1.100 13,0 15.900,0.900 15.900,3.300 13,4.700 10,3.600" fill="#3f9aea"/><polygon points="10.500,1.200 13,0.400 15.200,1.100 13,2" fill="#b5defc"/><polygon points="10,1.100 13,2 13,4.700 10,3.600" fill="#6dbcf7"/><rect x="0.400" y="4.400" width="1" height="2.200" fill="#eaf6ff"/><rect x="0.400" y="7.800" width="1" height="2.200" fill="#d9eefe"/><rect x="0.400" y="11.100" width="1" height="2" fill="#c3e3fb"/><rect x="2.500" y="4.500" width="1.400" height="1.600" fill="#5fb0f2"/><rect x="2.500" y="8" width="1.400" height="1.600" fill="#5fb0f2"/><rect x="2.500" y="11.500" width="1.400" height="1.600" fill="#6fbbf5"/><rect x="5.600" y="12.400" width="1.500" height="1.700" fill="#86c8f8"/><path d="M1.700 6.900H5.500M1.700 10.400H6.500M4.700 3.100V8.600M4.700 10.400V15" stroke="#1566c4" stroke-width="0.500" fill="none"/><polygon points="9.400,11.200 11,10.300 11,12.200 9.400,13.100" fill="#3f94e4"/><polygon points="12.300,9.500 14,8.600 14,10.500 12.300,11.400" fill="#3f94e4"/><path d="M11.700 8.400V14.100M8.400 13L15 9.400" stroke="#0a55a8" stroke-width="0.450" fill="none"/></svg><div class="t" style="left:118.8px;top:3px;letter-spacing:0.284px;">Timezone Information</div></div>
<div class="row" style="top:478px;"><svg class="ic" style="left:74px;top:4.9px" width="18.900" height="16.900" viewBox="0 0 18.900 16.900"><rect x="0.850" y="0.850" width="17.200" height="15.200" rx="4.200" fill="#fff" stroke="#d0d7e0" stroke-width="1.700"/></svg><svg class="ic" style="left:99px;top:5px" width="16" height="16" viewBox="0 0 16 16"><polygon points="0.100,2.600 2.900,2.100 6,2.900 6,5.300 7.800,4.700 10.500,5.900 13,5.700 15,6.600 15,12.300 8.400,16 0.100,13.700" fill="#1f7fda"/><polygon points="0.100,2.600 1.700,3.200 1.700,14.100 0.100,13.700" fill="#7cc2f7"/><polygon points="1.700,3.200 6,2.900 6,8.800 8.400,10.200 8.400,16 1.700,14.100" fill="#338fe3"/><polygon points="8.400,10.200 15,6.600 15,12.300 8.400,16" fill="#1268c6"/><polygon points="0.100,2.600 2.900,2.100 6,2.900 1.700,3.200" fill="#9ad2fa"/><polygon points="4.900,6.200 7.700,4.700 9.900,5.900 9.900,8.400 7.600,10 4.900,8.700" fill="#5cb3f5"/><polygon points="5.500,6.200 7.600,5.200 9.200,6 7.400,7.200" fill="#b5defc"/><polygon points="4.900,8.700 7.600,10 9.900,8.400 10.900,9.700 8.400,11.400 5.400,10.300" fill="#0a55a8"/><polygon points="10,1.100 13,0 15.900,0.900 15.900,3.300 13,4.700 10,3.600" fill="#3f9aea"/><polygon points="10.500,1.200 13,0.400 15.200,1.100 13,2" fill="#b5defc"/><polygon points="10,1.100 13,2 13,4.700 10,3.600" fill="#6dbcf7"/><rect x="0.400" y="4.400" width="1" height="2.200" fill="#eaf6ff"/><rect x="0.400" y="7.800" width="1" height="2.200" fill="#d9eefe"/><rect x="0.400" y="11.100" width="1" height="2" fill="#c3e3fb"/><rect x="2.500" y="4.500" width="1.400" height="1.600" fill="#5fb0f2"/><rect x="2.500" y="8" width="1.400" height="1.600" fill="#5fb0f2"/><rect x="2.500" y="11.500" width="1.400" height="1.600" fill="#6fbbf5"/><rect x="5.600" y="12.400" width="1.500" height="1.700" fill="#86c8f8"/><path d="M1.700 6.900H5.500M1.700 10.400H6.500M4.700 3.100V8.600M4.700 10.400V15" stroke="#1566c4" stroke-width="0.500" fill="none"/><polygon points="9.400,11.200 11,10.300 11,12.200 9.400,13.100" fill="#3f94e4"/><polygon points="12.300,9.500 14,8.600 14,10.500 12.300,11.400" fill="#3f94e4"/><path d="M11.700 8.400V14.100M8.400 13L15 9.400" stroke="#0a55a8" stroke-width="0.450" fill="none"/></svg><div class="t" style="left:118.8px;top:3px;letter-spacing:0.359px;">Typed Paths</div></div>
<div class="row" style="top:504px;"><svg class="ic" style="left:74px;top:4.9px" width="18.900" height="16.900" viewBox="0 0 18.900 16.900"><rect x="0.850" y="0.850" width="17.200" height="15.200" rx="4.200" fill="#fff" stroke="#d0d7e0" stroke-width="1.700"/></svg><svg class="ic" style="left:99px;top:5px" width="16" height="16" viewBox="0 0 16 16"><polygon points="0.100,2.600 2.900,2.100 6,2.900 6,5.300 7.800,4.700 10.500,5.900 13,5.700 15,6.600 15,12.300 8.400,16 0.100,13.700" fill="#1f7fda"/><polygon points="0.100,2.600 1.700,3.200 1.700,14.100 0.100,13.700" fill="#7cc2f7"/><polygon points="1.700,3.200 6,2.900 6,8.800 8.400,10.200 8.400,16 1.700,14.100" fill="#338fe3"/><polygon points="8.400,10.200 15,6.600 15,12.300 8.400,16" fill="#1268c6"/><polygon points="0.100,2.600 2.900,2.100 6,2.900 1.700,3.200" fill="#9ad2fa"/><polygon points="4.900,6.200 7.700,4.700 9.900,5.900 9.900,8.400 7.600,10 4.900,8.700" fill="#5cb3f5"/><polygon points="5.500,6.200 7.600,5.200 9.200,6 7.400,7.200" fill="#b5defc"/><polygon points="4.900,8.700 7.600,10 9.900,8.400 10.900,9.700 8.400,11.400 5.400,10.300" fill="#0a55a8"/><polygon points="10,1.100 13,0 15.900,0.900 15.900,3.300 13,4.700 10,3.600" fill="#3f9aea"/><polygon points="10.500,1.200 13,0.400 15.200,1.100 13,2" fill="#b5defc"/><polygon points="10,1.100 13,2 13,4.700 10,3.600" fill="#6dbcf7"/><rect x="0.400" y="4.400" width="1" height="2.200" fill="#eaf6ff"/><rect x="0.400" y="7.800" width="1" height="2.200" fill="#d9eefe"/><rect x="0.400" y="11.100" width="1" height="2" fill="#c3e3fb"/><rect x="2.500" y="4.500" width="1.400" height="1.600" fill="#5fb0f2"/><rect x="2.500" y="8" width="1.400" height="1.600" fill="#5fb0f2"/><rect x="2.500" y="11.500" width="1.400" height="1.600" fill="#6fbbf5"/><rect x="5.600" y="12.400" width="1.500" height="1.700" fill="#86c8f8"/><path d="M1.700 6.900H5.500M1.700 10.400H6.500M4.700 3.100V8.600M4.700 10.400V15" stroke="#1566c4" stroke-width="0.500" fill="none"/><polygon points="9.400,11.200 11,10.300 11,12.200 9.400,13.100" fill="#3f94e4"/><polygon points="12.300,9.500 14,8.600 14,10.500 12.300,11.400" fill="#3f94e4"/><path d="M11.700 8.400V14.100M8.400 13L15 9.400" stroke="#0a55a8" stroke-width="0.450" fill="none"/></svg><div class="t" style="left:118.8px;top:3px;letter-spacing:0.123px;">Typed URLs</div></div>
<div class="row" style="top:530px;background:#ebedf2"><svg class="ic" style="left:74px;top:4.9px" width="18.900" height="16.900" viewBox="0 0 18.900 16.900"><rect x="0.850" y="0.850" width="17.200" height="15.200" rx="4.200" fill="#fff" stroke="#d0d7e0" stroke-width="1.700"/></svg><svg class="ic " style="left:99.8px;top:6.85px" width="13.4" height="13.2" viewBox="0 0 88 88" preserveAspectRatio="none"><path fill="#4fb3e8" d="M0 12.402l35.687-4.86.016 34.423-35.67.203zm35.67 33.529l.028 34.453L.028 75.48.026 45.7zm4.326-39.025L87.314 0v41.527l-47.318.376zm47.329 39.349l-.011 41.34-47.318-6.678-.066-34.739z"/></svg><div class="t" style="left:118.8px;top:3px;letter-spacing:0.375px;">User Accounts</div></div>
<div class="row" style="top:556px;"><svg class="ic" style="left:74px;top:4.9px" width="18.900" height="16.900" viewBox="0 0 18.900 16.900"><rect x="0.850" y="0.850" width="17.200" height="15.200" rx="4.200" fill="#fff" stroke="#d0d7e0" stroke-width="1.700"/></svg><svg class="ic " style="left:99.8px;top:6.85px" width="13.4" height="13.2" viewBox="0 0 88 88" preserveAspectRatio="none"><path fill="#4fb3e8" d="M0 12.402l35.687-4.86.016 34.423-35.67.203zm35.67 33.529l.028 34.453L.028 75.48.026 45.7zm4.326-39.025L87.314 0v41.527l-47.318.376zm47.329 39.349l-.011 41.34-47.318-6.678-.066-34.739z"/></svg><div class="t" style="left:118.8px;top:3px;letter-spacing:0.16px;">User Groups</div></div>
<div class="row" style="top:582px;"><svg class="ic" style="left:74px;top:4.9px" width="18.900" height="16.900" viewBox="0 0 18.900 16.900"><rect x="0.850" y="0.850" width="17.200" height="15.200" rx="4.200" fill="#fff" stroke="#d0d7e0" stroke-width="1.700"/></svg><svg class="ic " style="left:99.8px;top:6.85px" width="13.4" height="13.2" viewBox="0 0 88 88" preserveAspectRatio="none"><path fill="#4fb3e8" d="M0 12.402l35.687-4.86.016 34.423-35.67.203zm35.67 33.529l.028 34.453L.028 75.48.026 45.7zm4.326-39.025L87.314 0v41.527l-47.318.376zm47.329 39.349l-.011 41.34-47.318-6.678-.066-34.739z"/></svg><div class="t" style="left:118.8px;top:3px;letter-spacing:0.256px;">UserAssist</div></div>
<div class="row" style="top:608px;"><svg class="ic" style="left:74px;top:4.9px" width="18.900" height="16.900" viewBox="0 0 18.900 16.900"><rect x="0.850" y="0.850" width="17.200" height="15.200" rx="4.200" fill="#fff" stroke="#d0d7e0" stroke-width="1.700"/></svg><svg class="ic" style="left:99px;top:5px" width="16" height="16" viewBox="0 0 16 16"><polygon points="0.100,2.600 2.900,2.100 6,2.900 6,5.300 7.800,4.700 10.500,5.900 13,5.700 15,6.600 15,12.300 8.400,16 0.100,13.700" fill="#1f7fda"/><polygon points="0.100,2.600 1.700,3.200 1.700,14.100 0.100,13.700" fill="#7cc2f7"/><polygon points="1.700,3.200 6,2.900 6,8.800 8.400,10.200 8.400,16 1.700,14.100" fill="#338fe3"/><polygon points="8.400,10.200 15,6.600 15,12.300 8.400,16" fill="#1268c6"/><polygon points="0.100,2.600 2.900,2.100 6,2.900 1.700,3.200" fill="#9ad2fa"/><polygon points="4.900,6.200 7.700,4.700 9.900,5.900 9.900,8.400 7.600,10 4.900,8.700" fill="#5cb3f5"/><polygon points="5.500,6.200 7.600,5.200 9.200,6 7.400,7.200" fill="#b5defc"/><polygon points="4.900,8.700 7.600,10 9.900,8.400 10.900,9.700 8.400,11.400 5.400,10.300" fill="#0a55a8"/><polygon points="10,1.100 13,0 15.900,0.900 15.900,3.300 13,4.700 10,3.600" fill="#3f9aea"/><polygon points="10.500,1.200 13,0.400 15.200,1.100 13,2" fill="#b5defc"/><polygon points="10,1.100 13,2 13,4.700 10,3.600" fill="#6dbcf7"/><rect x="0.400" y="4.400" width="1" height="2.200" fill="#eaf6ff"/><rect x="0.400" y="7.800" width="1" height="2.200" fill="#d9eefe"/><rect x="0.400" y="11.100" width="1" height="2" fill="#c3e3fb"/><rect x="2.500" y="4.500" width="1.400" height="1.600" fill="#5fb0f2"/><rect x="2.500" y="8" width="1.400" height="1.600" fill="#5fb0f2"/><rect x="2.500" y="11.500" width="1.400" height="1.600" fill="#6fbbf5"/><rect x="5.600" y="12.400" width="1.500" height="1.700" fill="#86c8f8"/><path d="M1.700 6.900H5.500M1.700 10.400H6.500M4.700 3.100V8.600M4.700 10.400V15" stroke="#1566c4" stroke-width="0.500" fill="none"/><polygon points="9.400,11.200 11,10.300 11,12.200 9.400,13.100" fill="#3f94e4"/><polygon points="12.300,9.500 14,8.600 14,10.500 12.300,11.400" fill="#3f94e4"/><path d="M11.700 8.400V14.100M8.400 13L15 9.400" stroke="#0a55a8" stroke-width="0.450" fill="none"/></svg><div class="t" style="left:118.8px;top:3px;letter-spacing:0.113px;">Windows File Extension Associations</div></div>
<div class="row" style="top:634px;"><svg class="ic" style="left:74px;top:4.9px" width="18.900" height="16.900" viewBox="0 0 18.900 16.900"><rect x="0.850" y="0.850" width="17.200" height="15.200" rx="4.200" fill="#fff" stroke="#d0d7e0" stroke-width="1.700"/></svg><svg class="ic" style="left:99px;top:5px" width="16" height="16" viewBox="0 0 16 16"><polygon points="0.100,2.600 2.900,2.100 6,2.900 6,5.300 7.800,4.700 10.500,5.900 13,5.700 15,6.600 15,12.300 8.400,16 0.100,13.700" fill="#1f7fda"/><polygon points="0.100,2.600 1.700,3.200 1.700,14.100 0.100,13.700" fill="#7cc2f7"/><polygon points="1.700,3.200 6,2.900 6,8.800 8.400,10.200 8.400,16 1.700,14.100" fill="#338fe3"/><polygon points="8.400,10.200 15,6.600 15,12.300 8.400,16" fill="#1268c6"/><polygon points="0.100,2.600 2.900,2.100 6,2.900 1.700,3.200" fill="#9ad2fa"/><polygon points="4.900,6.200 7.700,4.700 9.900,5.900 9.900,8.400 7.600,10 4.900,8.700" fill="#5cb3f5"/><polygon points="5.500,6.200 7.600,5.200 9.200,6 7.400,7.200" fill="#b5defc"/><polygon points="4.900,8.700 7.600,10 9.900,8.400 10.900,9.700 8.400,11.400 5.400,10.300" fill="#0a55a8"/><polygon points="10,1.100 13,0 15.900,0.900 15.900,3.300 13,4.700 10,3.600" fill="#3f9aea"/><polygon points="10.500,1.200 13,0.400 15.200,1.100 13,2" fill="#b5defc"/><polygon points="10,1.100 13,2 13,4.700 10,3.600" fill="#6dbcf7"/><rect x="0.400" y="4.400" width="1" height="2.200" fill="#eaf6ff"/><rect x="0.400" y="7.800" width="1" height="2.200" fill="#d9eefe"/><rect x="0.400" y="11.100" width="1" height="2" fill="#c3e3fb"/><rect x="2.500" y="4.500" width="1.400" height="1.600" fill="#5fb0f2"/><rect x="2.500" y="8" width="1.400" height="1.600" fill="#5fb0f2"/><rect x="2.500" y="11.500" width="1.400" height="1.600" fill="#6fbbf5"/><rect x="5.600" y="12.400" width="1.500" height="1.700" fill="#86c8f8"/><path d="M1.700 6.900H5.500M1.700 10.400H6.500M4.700 3.100V8.600M4.700 10.400V15" stroke="#1566c4" stroke-width="0.500" fill="none"/><polygon points="9.400,11.200 11,10.300 11,12.200 9.400,13.100" fill="#3f94e4"/><polygon points="12.300,9.500 14,8.600 14,10.500 12.300,11.400" fill="#3f94e4"/><path d="M11.700 8.400V14.100M8.400 13L15 9.400" stroke="#0a55a8" stroke-width="0.450" fill="none"/></svg><div class="t" style="left:118.8px;top:3px;letter-spacing:0.113px;">Windows File Extension Associations Programs</div></div>
<div class="row" style="top:660px;"><svg class="ic" style="left:74px;top:4.9px" width="18.900" height="16.900" viewBox="0 0 18.900 16.900"><rect x="0.850" y="0.850" width="17.200" height="15.200" rx="4.200" fill="#fff" stroke="#d0d7e0" stroke-width="1.700"/></svg><svg class="ic" style="left:99px;top:5px" width="16" height="16" viewBox="0 0 16 16"><polygon points="0.100,2.600 2.900,2.100 6,2.900 6,5.300 7.800,4.700 10.500,5.900 13,5.700 15,6.600 15,12.300 8.400,16 0.100,13.700" fill="#1f7fda"/><polygon points="0.100,2.600 1.700,3.200 1.700,14.100 0.100,13.700" fill="#7cc2f7"/><polygon points="1.700,3.200 6,2.900 6,8.800 8.400,10.200 8.400,16 1.700,14.100" fill="#338fe3"/><polygon points="8.400,10.200 15,6.600 15,12.300 8.400,16" fill="#1268c6"/><polygon points="0.100,2.600 2.900,2.100 6,2.900 1.700,3.200" fill="#9ad2fa"/><polygon points="4.900,6.200 7.700,4.700 9.900,5.900 9.900,8.400 7.600,10 4.900,8.700" fill="#5cb3f5"/><polygon points="5.500,6.200 7.600,5.200 9.200,6 7.400,7.200" fill="#b5defc"/><polygon points="4.900,8.700 7.600,10 9.900,8.400 10.900,9.700 8.400,11.400 5.400,10.300" fill="#0a55a8"/><polygon points="10,1.100 13,0 15.900,0.900 15.900,3.300 13,4.700 10,3.600" fill="#3f9aea"/><polygon points="10.500,1.200 13,0.400 15.200,1.100 13,2" fill="#b5defc"/><polygon points="10,1.100 13,2 13,4.700 10,3.600" fill="#6dbcf7"/><rect x="0.400" y="4.400" width="1" height="2.200" fill="#eaf6ff"/><rect x="0.400" y="7.800" width="1" height="2.200" fill="#d9eefe"/><rect x="0.400" y="11.100" width="1" height="2" fill="#c3e3fb"/><rect x="2.500" y="4.500" width="1.400" height="1.600" fill="#5fb0f2"/><rect x="2.500" y="8" width="1.400" height="1.600" fill="#5fb0f2"/><rect x="2.500" y="11.500" width="1.400" height="1.600" fill="#6fbbf5"/><rect x="5.600" y="12.400" width="1.500" height="1.700" fill="#86c8f8"/><path d="M1.700 6.900H5.500M1.700 10.400H6.500M4.700 3.100V8.600M4.700 10.400V15" stroke="#1566c4" stroke-width="0.500" fill="none"/><polygon points="9.400,11.200 11,10.300 11,12.200 9.400,13.100" fill="#3f94e4"/><polygon points="12.300,9.500 14,8.600 14,10.500 12.300,11.400" fill="#3f94e4"/><path d="M11.700 8.400V14.100M8.400 13L15 9.400" stroke="#0a55a8" stroke-width="0.450" fill="none"/></svg><div class="t" style="left:118.8px;top:3px;letter-spacing:0.149px;">Windows OS Default Browser</div></div>
<div class="row" style="top:686px;"><svg class="ic" style="left:74px;top:4.9px" width="18.900" height="16.900" viewBox="0 0 18.900 16.900"><rect x="0.850" y="0.850" width="17.200" height="15.200" rx="4.200" fill="#fff" stroke="#d0d7e0" stroke-width="1.700"/></svg><svg class="ic " style="left:99.8px;top:6.85px" width="13.4" height="13.2" viewBox="0 0 88 88" preserveAspectRatio="none"><path fill="#4fb3e8" d="M0 12.402l35.687-4.86.016 34.423-35.67.203zm35.67 33.529l.028 34.453L.028 75.48.026 45.7zm4.326-39.025L87.314 0v41.527l-47.318.376zm47.329 39.349l-.011 41.34-47.318-6.678-.066-34.739z"/></svg><div class="t" style="left:118.8px;top:3px;letter-spacing:0.243px;">Windows Services</div></div>
<div class="row" style="top:712px;"><svg class="ic" style="left:40.3px;top:7px" width="11" height="13" viewBox="0 0 11 13"><path d="M2.300 1.500L8 6.500 2.300 11.500" fill="none" stroke="#555e6b" stroke-width="2"/></svg><svg class="ic" style="left:58px;top:4.9px" width="18.900" height="16.900" viewBox="0 0 18.900 16.900"><rect x="0.850" y="0.850" width="17.200" height="15.200" rx="4.200" fill="#fff" stroke="#d0d7e0" stroke-width="1.700"/></svg><svg class="ic" style="left:84.3px;top:6px" width="14" height="14" viewBox="0 0 28 28"><defs><radialGradient id="gg" cx="0.500" cy="0.900" r="0.900"><stop offset="0" stop-color="#45e8f8"/><stop offset="0.300" stop-color="#1f9bdc"/><stop offset="0.650" stop-color="#1460b4"/><stop offset="1" stop-color="#0a2f66"/></radialGradient></defs><circle cx="14" cy="14" r="13.700" fill="url(#gg)"/><ellipse cx="13" cy="7" rx="6" ry="3.200" fill="#8fd3f5" opacity="0.450"/></svg><div class="t" style="left:102.6px;top:3px;letter-spacing:0.5px;">Web Activity</div></div>
<div class="row" style="top:738px;"><svg class="ic" style="left:40.3px;top:7px" width="11" height="13" viewBox="0 0 11 13"><path d="M2.300 1.500L8 6.500 2.300 11.500" fill="none" stroke="#555e6b" stroke-width="2"/></svg><svg class="ic" style="left:58px;top:4.9px" width="18.900" height="16.900" viewBox="0 0 18.900 16.900"><rect x="0.850" y="0.850" width="17.200" height="15.200" rx="4.200" fill="#fff" stroke="#d0d7e0" stroke-width="1.700"/></svg><svg class="ic" style="left:83.6px;top:5.7px" width="14.600" height="14.600" viewBox="0 0 30 30"><rect width="30" height="30" rx="2" fill="#189bf0"/><path d="M5 10.500l20-2.500v17.500l-20-2.500z" fill="#fff"/><path d="M11 9.500V5.500a1.500 1.500 0 0 1 1.500-1.500h3.500a1.500 1.500 0 0 1 1.500 1.500v3" fill="none" stroke="#fff" stroke-width="1.300"/><path d="M8.500 13.300l4.800-.600v4.200H8.500zm5.800-.750l5.700-.750v5.100h-5.700zM8.500 17.900h4.800v4.100l-4.800-.600zm5.800 0h5.700v5l-5.700-.750z" fill="#189bf0"/></svg><div class="t" style="left:102.6px;top:3px;letter-spacing:0.25px;">Win Apps</div></div>
<div class="a" style="left:330px;top:0;width:8px;height:764px;background:#eeeeee"></div>
<div class="a" style="left:330.500px;top:383px;width:7.500px;height:370px;background:#a9aeb4;border-radius:3.750px"></div>
<div class="a" style="left:0;top:764px;width:338px;height:8px;background:#eeeeee"></div>
<div class="a" style="left:10px;top:764px;width:187.500px;height:8px;background:#a9aeb4;border-radius:4px"></div>
</div>
<div class="a" style="left:382px;top:41px;width:4px;height:861px;background:#eeeeee"></div>
<div class="a" style="left:382px;top:461px;width:4px;height:20px;background:#a9aeb4"></div>
<div class="a" style="left:391px;top:82px;width:1524px;height:2px;background:#cdd3dd"></div>
<div class="a" style="left:391px;top:82px;width:136px;height:2px;background:#0058d4"></div>
<svg class="ic" style="left:407px;top:59px" width="14.500" height="15.500" viewBox="0 0 14.500 15.500"><rect x="0.900" y="0.900" width="12.200" height="10.300" rx="1.500" fill="none" stroke="#212834" stroke-width="1.700"/><rect x="0.900" y="0.900" width="12.200" height="2.300" fill="#212834"/><rect x="3" y="13.700" width="1.900" height="1.400" rx="0.500" fill="#212834"/><rect x="6.100" y="13.700" width="1.900" height="1.400" rx="0.500" fill="#212834"/><rect x="9.200" y="13.700" width="1.900" height="1.400" rx="0.500" fill="#212834"/></svg>
<div class="t" style="left:426.8px;top:55px;letter-spacing:0.439px;">Artifact View</div>
<svg class="ic" style="left:540.5px;top:56.5px" width="17.5" height="17.5" viewBox="0 0 24 24"><path d="M23 8c0 1.100-.900 2-2 2-.180 0-.350-.020-.510-.070l-3.560 3.550c.050.160.070.340.070.520 0 1.100-.900 2-2 2s-2-.900-2-2c0-.180.020-.360.070-.520l-2.550-2.550c-.160.050-.340.070-.520.070s-.360-.020-.520-.070l-4.550 4.560c.050.160.070.330.070.510 0 1.100-.900 2-2 2s-2-.900-2-2 .900-2 2-2c.180 0 .350.020.510.070l4.560-4.550C8.020 9.360 8 9.180 8 9c0-1.100.900-2 2-2s2 .900 2 2c0 .180-.020.360-.070.520l2.550 2.550c.160-.050.340-.070.520-.070s.360.020.520.070l3.550-3.560C19.020 8.350 19 8.180 19 8c0-1.100.900-2 2-2s2 .900 2 2z" fill="#212834"/></svg>
<div class="t" style="left:563.5px;top:55px;letter-spacing:0.162px;">Timeline View</div>
<svg class="ic" style="left:685.700px;top:58px" width="12" height="14.500" viewBox="0 0 12 14.500"><path d="M1.500 0H7.500L12 4.500V13a1.500 1.500 0 0 1-1.500 1.500H1.500a1.500 1.500 0 0 1-1.500-1.500V1.500a1.500 1.500 0 0 1 1.500-1.500z" fill="#212834"/><path d="M7.200 0.900V4.900H11.200z" fill="#fff"/><path d="M2.300 7.100h6.500v5.200H2.300zM2.300 8.850h6.500M2.300 10.600h6.500M4.700 7.100v5.200" fill="none" stroke="#fff" stroke-width="0.850"/></svg>
<div class="t" style="left:704.3px;top:55px;letter-spacing:0.316px;">Reporting</div>
<div class="a" style="left:391px;top:85px;width:1524px;height:44px;background:#f7f8fa;border-bottom:1px solid #cdd3dd"></div>
<svg class="ic" style="left:412px;top:102px" width="8" height="11" viewBox="0 0 8 11"><path d="M6 1.300L1.800 5.500 6 9.700" fill="none" stroke="#212834" stroke-width="1.500"/></svg>
<svg class="ic" style="left:425px;top:99px" width="16" height="16" viewBox="0 0 16 16"><polygon points="0.100,2.600 2.900,2.100 6,2.900 6,5.300 7.800,4.700 10.500,5.900 13,5.700 15,6.600 15,12.300 8.400,16 0.100,13.700" fill="#1f7fda"/><polygon points="0.100,2.600 1.700,3.200 1.700,14.100 0.100,13.700" fill="#7cc2f7"/><polygon points="1.700,3.200 6,2.900 6,8.800 8.400,10.200 8.400,16 1.700,14.100" fill="#338fe3"/><polygon points="8.400,10.200 15,6.600 15,12.300 8.400,16" fill="#1268c6"/><polygon points="0.100,2.600 2.900,2.100 6,2.900 1.700,3.200" fill="#9ad2fa"/><polygon points="4.900,6.200 7.700,4.700 9.900,5.900 9.900,8.400 7.600,10 4.900,8.700" fill="#5cb3f5"/><polygon points="5.500,6.200 7.600,5.200 9.200,6 7.400,7.200" fill="#b5defc"/><polygon points="4.900,8.700 7.600,10 9.900,8.400 10.900,9.700 8.400,11.400 5.400,10.300" fill="#0a55a8"/><polygon points="10,1.100 13,0 15.900,0.900 15.900,3.300 13,4.700 10,3.600" fill="#3f9aea"/><polygon points="10.500,1.200 13,0.400 15.200,1.100 13,2" fill="#b5defc"/><polygon points="10,1.100 13,2 13,4.700 10,3.600" fill="#6dbcf7"/><rect x="0.400" y="4.400" width="1" height="2.200" fill="#eaf6ff"/><rect x="0.400" y="7.800" width="1" height="2.200" fill="#d9eefe"/><rect x="0.400" y="11.100" width="1" height="2" fill="#c3e3fb"/><rect x="2.500" y="4.500" width="1.400" height="1.600" fill="#5fb0f2"/><rect x="2.500" y="8" width="1.400" height="1.600" fill="#5fb0f2"/><rect x="2.500" y="11.500" width="1.400" height="1.600" fill="#6fbbf5"/><rect x="5.600" y="12.400" width="1.500" height="1.700" fill="#86c8f8"/><path d="M1.700 6.900H5.500M1.700 10.400H6.500M4.700 3.100V8.600M4.700 10.400V15" stroke="#1566c4" stroke-width="0.500" fill="none"/><polygon points="9.400,11.200 11,10.300 11,12.200 9.400,13.100" fill="#3f94e4"/><polygon points="12.300,9.500 14,8.600 14,10.500 12.300,11.400" fill="#3f94e4"/><path d="M11.700 8.400V14.100M8.400 13L15 9.400" stroke="#0a55a8" stroke-width="0.450" fill="none"/></svg>
<div class="t" style="left:444.8px;top:97px;letter-spacing:0.176px;">MRU Microsoft Management Console Files</div>
<svg class="ic " style="left:1115.8px;top:101.2px" width="13.4" height="12.8" viewBox="0 0 88 88" preserveAspectRatio="none"><path fill="#4fb3e8" d="M0 12.402l35.687-4.86.016 34.423-35.67.203zm35.67 33.529l.028 34.453L.028 75.48.026 45.7zm4.326-39.025L87.314 0v41.527l-47.318.376zm47.329 39.349l-.011 41.34-47.318-6.678-.066-34.739z"/></svg>
<div class="t" style="left:1134.8px;top:97px;letter-spacing:0.346px;">User Accounts</div>
<svg class="ic" style="left:1620px;top:99px" width="16" height="16" viewBox="0 0 16 16"><polygon points="0.100,2.600 2.900,2.100 6,2.900 6,5.300 7.800,4.700 10.500,5.900 13,5.700 15,6.600 15,12.300 8.400,16 0.100,13.700" fill="#1f7fda"/><polygon points="0.100,2.600 1.700,3.200 1.700,14.100 0.100,13.700" fill="#7cc2f7"/><polygon points="1.700,3.200 6,2.900 6,8.800 8.400,10.200 8.400,16 1.700,14.100" fill="#338fe3"/><polygon points="8.400,10.200 15,6.600 15,12.300 8.400,16" fill="#1268c6"/><polygon points="0.100,2.600 2.900,2.100 6,2.900 1.700,3.200" fill="#9ad2fa"/><polygon points="4.900,6.200 7.700,4.700 9.900,5.900 9.900,8.400 7.600,10 4.900,8.700" fill="#5cb3f5"/><polygon points="5.500,6.200 7.600,5.200 9.200,6 7.400,7.200" fill="#b5defc"/><polygon points="4.900,8.700 7.600,10 9.900,8.400 10.900,9.700 8.400,11.400 5.400,10.300" fill="#0a55a8"/><polygon points="10,1.100 13,0 15.900,0.900 15.900,3.300 13,4.700 10,3.600" fill="#3f9aea"/><polygon points="10.500,1.200 13,0.400 15.200,1.100 13,2" fill="#b5defc"/><polygon points="10,1.100 13,2 13,4.700 10,3.600" fill="#6dbcf7"/><rect x="0.400" y="4.400" width="1" height="2.200" fill="#eaf6ff"/><rect x="0.400" y="7.800" width="1" height="2.200" fill="#d9eefe"/><rect x="0.400" y="11.100" width="1" height="2" fill="#c3e3fb"/><rect x="2.500" y="4.500" width="1.400" height="1.600" fill="#5fb0f2"/><rect x="2.500" y="8" width="1.400" height="1.600" fill="#5fb0f2"/><rect x="2.500" y="11.500" width="1.400" height="1.600" fill="#6fbbf5"/><rect x="5.600" y="12.400" width="1.500" height="1.700" fill="#86c8f8"/><path d="M1.700 6.900H5.500M1.700 10.400H6.500M4.700 3.100V8.600M4.700 10.400V15" stroke="#1566c4" stroke-width="0.500" fill="none"/><polygon points="9.400,11.200 11,10.300 11,12.200 9.400,13.100" fill="#3f94e4"/><polygon points="12.300,9.500 14,8.600 14,10.500 12.300,11.400" fill="#3f94e4"/><path d="M11.700 8.400V14.100M8.400 13L15 9.400" stroke="#0a55a8" stroke-width="0.450" fill="none"/></svg>
<div class="t" style="left:1639.9px;top:97px;letter-spacing:0.269px;">Network Location Awareness Cache</div>
<svg class="ic" style="left:1886px;top:102px" width="8" height="11" viewBox="0 0 8 11"><path d="M2 1.300L6.200 5.500 2 9.700" fill="none" stroke="#212834" stroke-width="1.500"/></svg>
<div class="a" style="left:391px;top:129px;width:914px;height:730px;border:1px solid #cdd3dd;border-bottom:none;background:#fff"></div>
<div class="a" style="left:392px;top:130px;width:912px;height:39px;background:#f7f8fa"></div>
<div class="hl" style="left:392px;top:169px;width:912px"></div>
<div class="vl" style="left:431px;top:130px;height:39px"></div>
<div class="vl" style="left:471px;top:130px;height:39px"></div>
<div class="vl" style="left:641px;top:130px;height:39px"></div>
<div class="vl" style="left:841px;top:130px;height:39px"></div>
<div class="vl" style="left:1141px;top:130px;height:39px"></div>
<svg class="ic" style="left:402.900px;top:143.500px" width="10.100" height="13.500" viewBox="0 0 10.100 13.500"><path d="M1.200 0H8.900a1.200 1.200 0 0 1 1.200 1.200V13.500Q5.050 9.300 0 13.500V1.200a1.200 1.200 0 0 1 1.200-1.200z" fill="#212834"/></svg>
<svg class="ic" style="left:441.200px;top:143.500px" width="13.500" height="13.500" viewBox="0 0 13.500 13.500"><path d="M1.500 0H8.700L13.500 4.800V12a1.500 1.500 0 0 1-1.500 1.500H1.500a1.500 1.500 0 0 1-1.500-1.500V1.500a1.500 1.500 0 0 1 1.500-1.500z" fill="#212834"/><path d="M8 1V5.300H12.300z" fill="#f7f8fa"/><rect x="1.700" y="6.600" width="10.200" height="1.700" fill="#dcdfe3"/><rect x="1.700" y="9.750" width="7" height="1.700" fill="#dcdfe3"/></svg>
<div class="t b" style="left:479.1px;top:140px;letter-spacing:0.102px;">Time (Europe/Istan...</div>
<div class="t b" style="left:648.8px;top:140px;letter-spacing:0.052px;">Time Description</div>
<div class="t b" style="left:848.55px;top:140px;letter-spacing:0.196px;">Source</div>
<div class="t b" style="left:1148.55px;top:140px;letter-spacing:0.245px;">#Username</div>
<svg class="ic" style="left:1297.300px;top:140.400px" width="5" height="17" viewBox="0 0 5 17"><circle cx="2.500" cy="2.200" r="1.750" fill="#212834"/><circle cx="2.500" cy="8.200" r="1.750" fill="#212834"/><circle cx="2.500" cy="14.200" r="1.750" fill="#212834"/></svg>
<div class="a" style="left:392px;top:170px;width:912px;height:27px;background:#ebedf2"></div>
<div class="hl" style="left:392px;top:197px;width:912px"></div>
<div class="t" style="left:486.4px;top:174px;letter-spacing:0.431px;">12/27/2024 03:06:49</div>
<div class="t" style="left:651.3px;top:174px;letter-spacing:0.209px;">Date/Time when user last...</div>
<div class="t" style="left:848.55px;top:174px;letter-spacing:0.34px;">/vol1//Windows/System32/config/SAM</div>
<div class="t" style="left:1148.55px;top:174px;letter-spacing:0.569px;">phorger</div>
<div class="hl" style="left:392px;top:225px;width:912px"></div>
<div class="t it" style="left:499.6px;top:202px;letter-spacing:0.114px;">&lt;Timeless Entry&gt;</div>
<div class="t it" style="left:684.3px;top:202px;letter-spacing:0.114px;">&lt;Timeless Entry&gt;</div>
<div class="t" style="left:848.55px;top:202px;letter-spacing:0.34px;">/vol1//Windows/System32/config/SAM</div>
<div class="t" style="left:1148.55px;top:202px;letter-spacing:0.247px;">WDAGUtilityAccount</div>
<div class="hl" style="left:392px;top:253px;width:912px"></div>
<div class="t it" style="left:499.6px;top:230px;letter-spacing:0.114px;">&lt;Timeless Entry&gt;</div>
<div class="t it" style="left:684.3px;top:230px;letter-spacing:0.114px;">&lt;Timeless Entry&gt;</div>
<div class="t" style="left:848.55px;top:230px;letter-spacing:0.34px;">/vol1//Windows/System32/config/SAM</div>
<div class="t" style="left:1148.55px;top:230px;letter-spacing:0.37px;">DefaultAccount</div>
<div class="hl" style="left:392px;top:281px;width:912px"></div>
<div class="t it" style="left:499.6px;top:258px;letter-spacing:0.114px;">&lt;Timeless Entry&gt;</div>
<div class="t it" style="left:684.3px;top:258px;letter-spacing:0.114px;">&lt;Timeless Entry&gt;</div>
<div class="t" style="left:848.55px;top:258px;letter-spacing:0.34px;">/vol1//Windows/System32/config/SAM</div>
<div class="t" style="left:1148.55px;top:258px;letter-spacing:0.366px;">Guest</div>
<div class="hl" style="left:392px;top:309px;width:912px"></div>
<div class="t it" style="left:499.6px;top:286px;letter-spacing:0.114px;">&lt;Timeless Entry&gt;</div>
<div class="t it" style="left:684.3px;top:286px;letter-spacing:0.114px;">&lt;Timeless Entry&gt;</div>
<div class="t" style="left:848.55px;top:286px;letter-spacing:0.34px;">/vol1//Windows/System32/config/SAM</div>
<div class="t" style="left:1148.55px;top:286px;letter-spacing:0.394px;">Administrator</div>
<div class="a" style="left:392px;top:851px;width:912px;height:8px;background:#eeeeee"></div>
<div class="a" style="left:402px;top:851px;width:103px;height:8px;background:#a9aeb4;border-radius:4px"></div>
<div class="hl" style="left:391px;top:859px;width:914px"></div>
<div class="a" style="left:1305px;top:129px;width:4px;height:731px;background:#eeeeee"></div>
<div class="a" style="left:1305px;top:485px;width:4px;height:20px;background:#a9aeb4"></div>
<div class="a" style="left:391px;top:860px;width:1524px;height:42px;background:#f7f8fa;border-bottom:1px solid #ccd2d9"></div>
<svg class="ic" style="left:986.5px;top:876px" width="13" height="11" viewBox="0 0 13 11"><path d="M5.500 1.500L2 5.500 5.500 9.500M10.700 1.500L7.200 5.500 10.700 9.500" fill="none" stroke="#8a929e" stroke-width="1.400"/></svg>
<svg class="ic" style="left:1034.5px;top:876px" width="9" height="11" viewBox="0 0 9 11"><path d="M6.300 1.500L2.800 5.500 6.300 9.500" fill="none" stroke="#8a929e" stroke-width="1.400"/></svg>
<svg class="ic" style="left:1263px;top:876px" width="9" height="11" viewBox="0 0 9 11"><path d="M2.700 1.500L6.200 5.500 2.700 9.500" fill="none" stroke="#8a929e" stroke-width="1.400"/></svg>
<svg class="ic" style="left:1307px;top:876px" width="13" height="11" viewBox="0 0 13 11"><path d="M2.300 1.500L5.800 5.500 2.300 9.500M7.500 1.500L11 5.500 7.500 9.500" fill="none" stroke="#8a929e" stroke-width="1.400"/></svg>
<div class="box" style="left:1064px;top:864px;width:179px;height:34px;background:#f7f8fa;overflow:hidden"><div class="a" style="left:0;top:0;width:75px;height:32px;background:#fff;border-right:1px solid #cdd3dd"></div><div class="a" style="left:103px;top:0;width:1px;height:32px;background:#cdd3dd"></div></div>
<div class="t" style="left:1075.3px;top:871px;letter-spacing:0.124px;">1</div>
<div class="t" style="left:1150.3px;top:871px;letter-spacing:0.062px;">/</div>
<div class="t" style="left:1179.3px;top:871px;letter-spacing:0.124px;">1</div>
<div class="box" style="left:1811px;top:864px;width:100px;height:34px;background:#fff"></div>
<div class="t" style="left:1824.0px;top:871px;letter-spacing:1.2px;">30</div>
<svg class="ic" style="left:1894px;top:878.300px" width="10" height="5.200" viewBox="0 0 10 5.200"><path d="M0 0h10L5 5.200z" fill="#4d5562"/></svg>
<div class="a" style="left:0;top:902px;width:1919px;height:7px;background:#f7f8fa;border-top:1px solid #cfd2d6;border-left:1px solid #cfd2d6"></div>
<svg class="ic " style="left:1319.9px;top:191.9px" width="14.3" height="16.1" viewBox="0 0 88 88" preserveAspectRatio="none"><path fill="#a3cfe8" d="M1 13.200L86.500 1V86.600L1 74.700z"/><path fill="#1a82c0" d="M0 12.402l35.687-4.86.016 34.423-35.67.203zm35.67 33.529l.028 34.453L.028 75.48.026 45.7zm4.326-39.025L87.314 0v41.527l-47.318.376zm47.329 39.349l-.011 41.34-47.318-6.678-.066-34.739z"/></svg>
<div class="t" style="left:1338.9px;top:190px;letter-spacing:0.345px;">Windows</div>
<svg class="ic" style="left:1411px;top:195px" width="9" height="11" viewBox="0 0 9 11"><path d="M2.300 1.300L6.800 5.500 2.300 9.700" fill="none" stroke="#212834" stroke-width="1.400"/></svg>
<svg class="ic" style="left:1432.5px;top:192px" width="15" height="15" viewBox="0 0 15 15"><rect x="0.3" y="1.6" width="3.900" height="3.900" fill="#5b2a86"/><rect x="4.9" y="1.4" width="3.900" height="3.900" fill="#8a2387"/><rect x="10.7" y="0.4" width="3.900" height="3.900" fill="#b5179e"/><rect x="0.3" y="6.2" width="3.900" height="3.900" fill="#7b2cbf"/><rect x="4.9" y="6.2" width="3.900" height="3.900" fill="#c9184a"/><rect x="9.5" y="6.2" width="3.900" height="3.900" fill="#e5383b"/><rect x="0.3" y="10.8" width="3.900" height="3.900" fill="#6a1b9a"/><rect x="4.9" y="10.8" width="3.900" height="3.900" fill="#a4133c"/><rect x="9.5" y="10.8" width="3.900" height="3.900" fill="#d00060"/></svg>
<div class="t" style="left:1451.9px;top:190px;letter-spacing:0.23px;">Registry</div>
<svg class="ic" style="left:1518.500px;top:195px" width="9" height="11" viewBox="0 0 9 11"><path d="M2.300 1.300L6.800 5.500 2.300 9.700" fill="none" stroke="#212834" stroke-width="1.400"/></svg>
<svg class="ic " style="left:1539.8px;top:193.9px" width="13.4" height="12.8" viewBox="0 0 88 88" preserveAspectRatio="none"><path fill="#4fb3e8" d="M0 12.402l35.687-4.86.016 34.423-35.67.203zm35.67 33.529l.028 34.453L.028 75.48.026 45.7zm4.326-39.025L87.314 0v41.527l-47.318.376zm47.329 39.349l-.011 41.34-47.318-6.678-.066-34.739z"/></svg>
<div class="t" style="left:1558.8px;top:190px;letter-spacing:0.383px;">User Accounts</div>
<div class="box" style="left:1319px;top:217px;width:586px;height:539px;background:#fff"></div>
<div class="t" style="left:1328.9px;top:222px;font-size:16px;letter-spacing:0.327px;">Artifact Fields</div>
<div class="a" style="left:1330px;top:256px;width:564px;height:494px;border:1px solid #cdd3dd;background:#fff;overflow:hidden">
<div class="a" style="left:0;top:0;width:562px;height:34px;background:#f7f8fa;border-bottom:1px solid #cdd3dd;z-index:2"></div>
<div class="vl" style="left:276px;top:0;height:33px;z-index:3"></div><div class="vl" style="left:553px;top:0;height:33px;z-index:3"></div>
<div class="t b" style="left:6.7px;top:7px;letter-spacing:-0.036px;z-index:3">Field</div>
<div class="t b" style="left:283.5px;top:7px;letter-spacing:0.602px;z-index:3">Value</div>
<div class="a" style="left:0;top:16px;width:554px;height:28px;border-bottom:1px solid #cdd3dd;">
<div class="ty" style="left:9.800px;top:4px">ab</div>
<div class="t" style="left:28.7px;top:4px;letter-spacing:0.118px;">User Password Hint</div>
</div>
<div class="a" style="left:0;top:44px;width:554px;height:28px;border-bottom:1px solid #cdd3dd;">
<div class="ty" style="left:9.800px;top:4px">ab</div>
<div class="t" style="left:28.7px;top:4px;letter-spacing:0.257px;">Internet Username</div>
</div>
<div class="a" style="left:0;top:72px;width:554px;height:28px;border-bottom:1px solid #cdd3dd;">
<div class="ty" style="left:7.500px;top:4px;font-size:10.500px;letter-spacing:-0.600px">123</div>
<div class="t" style="left:28.7px;top:4px;letter-spacing:0.27px;">Login Count</div>
<div class="t" style="left:283.5px;top:4px;letter-spacing:-0.45px;">15</div>
</div>
<div class="a" style="left:0;top:100px;width:554px;height:28px;border-bottom:1px solid #cdd3dd;">
<div class="ty" style="left:9.800px;top:4px">ab</div>
<div class="t" style="left:28.7px;top:4px;letter-spacing:0.162px;">Password Does Not Expire</div>
</div>
<div class="a" style="left:0;top:128px;width:554px;height:28px;border-bottom:1px solid #cdd3dd;">
<svg class="ic" style="left:6.6px;top:5px" width="18" height="18" viewBox="0 0 24 24"><path d="M11.990 2C6.470 2 2 6.480 2 12s4.470 10 9.990 10C17.520 22 22 17.520 22 12S17.520 2 11.990 2zM12 20c-4.420 0-8-3.580-8-8s3.580-8 8-8 8 3.580 8 8-3.580 8-8 8zm.500-13H11v6l5.250 3.150.750-1.230-4.500-2.670z" fill="#1a6de0"/></svg>
<div class="t" style="left:28.7px;top:4px;letter-spacing:0.175px;">Last Password Reset Date/Time</div>
<div class="t" style="left:283.5px;top:4px;letter-spacing:0.331px;">04/01/2022 00:49:51</div>
</div>
<div class="a" style="left:0;top:156px;width:554px;height:28px;border-bottom:1px solid #cdd3dd;">
<div class="ty" style="left:9.800px;top:4px">ab</div>
<div class="t" style="left:28.7px;top:4px;letter-spacing:0.278px;">Normal User Account</div>
<div class="t" style="left:283.5px;top:4px;letter-spacing:0.188px;">Yes</div>
</div>
<div class="a" style="left:0;top:184px;width:554px;height:28px;border-bottom:1px solid #cdd3dd;background:#ebedf2">
<div class="ty" style="left:9.800px;top:4px">ab</div>
<div class="t" style="left:28.7px;top:4px;letter-spacing:0.158px;">Username</div>
<div class="t" style="left:283.5px;top:4px;letter-spacing:0.586px;">phorger</div>
</div>
<div class="a" style="left:0;top:212px;width:554px;height:28px;border-bottom:1px solid #cdd3dd;">
<div class="ty" style="left:9.800px;top:4px">ab</div>
<div class="t" style="left:28.7px;top:4px;letter-spacing:0.499px;">Account Type</div>
<div class="t" style="left:283.5px;top:4px;letter-spacing:0.185px;">244</div>
</div>
<div class="a" style="left:0;top:240px;width:554px;height:28px;border-bottom:1px solid #cdd3dd;">
<div class="ty" style="left:9.800px;top:4px">ab</div>
<div class="t" style="left:28.7px;top:4px;letter-spacing:0.25px;">Account Disabled</div>
</div>
<div class="a" style="left:0;top:268px;width:554px;height:28px;border-bottom:1px solid #cdd3dd;">
<div class="ty" style="left:9.800px;top:4px">ab</div>
<div class="t" style="left:28.7px;top:4px;letter-spacing:0.32px;">Inter Domain Trust Account</div>
</div>
<div class="a" style="left:0;top:296px;width:554px;height:28px;border-bottom:1px solid #cdd3dd;">
<div class="ty" style="left:9.800px;top:4px">ab</div>
<div class="t" style="left:28.7px;top:4px;letter-spacing:0.381px;">Temporary Duplicate Account</div>
</div>
<div class="a" style="left:0;top:324px;width:554px;height:28px;border-bottom:1px solid #cdd3dd;">
<div class="ty" style="left:9.800px;top:4px">ab</div>
<div class="t" style="left:28.7px;top:4px;letter-spacing:0.185px;">Profile Path</div>
</div>
<div class="a" style="left:0;top:352px;width:554px;height:28px;border-bottom:1px solid #cdd3dd;">
<div class="ty" style="left:9.800px;top:4px">ab</div>
<div class="t" style="left:28.7px;top:4px;letter-spacing:0.162px;">User Group(s)</div>
<div class="t" style="left:283.5px;top:4px;letter-spacing:0.3px;">Administrators, Users</div>
</div>
<div class="a" style="left:0;top:380px;width:554px;height:28px;border-bottom:1px solid #cdd3dd;">
<div class="ty" style="left:9.800px;top:4px">ab</div>
<div class="t" style="left:28.7px;top:4px;letter-spacing:0.316px;">Logon Script</div>
</div>
<div class="a" style="left:0;top:408px;width:554px;height:28px;border-bottom:1px solid #cdd3dd;">
<div class="ty" style="left:7.500px;top:4px;font-size:10.500px;letter-spacing:-0.600px">123</div>
<div class="t" style="left:28.7px;top:4px;letter-spacing:-0.45px;">RID</div>
<div class="t" style="left:283.5px;top:4px;letter-spacing:0.478px;">1000</div>
</div>
<div class="a" style="left:0;top:436px;width:554px;height:28px;border-bottom:1px solid #cdd3dd;">
<div class="ty" style="left:7.500px;top:4px;font-size:10.500px;letter-spacing:-0.600px">123</div>
<div class="t" style="left:28.7px;top:4px;letter-spacing:0.122px;">Failed Login Count</div>
<div class="t" style="left:283.5px;top:4px;letter-spacing:0.124px;">0</div>
</div>
<div class="a" style="left:0;top:464px;width:554px;height:28px;border-bottom:1px solid #cdd3dd;">
<div class="ty" style="left:9.800px;top:4px">ab</div>
<div class="t" style="left:28.7px;top:4px;letter-spacing:0.221px;">Internet UID</div>
</div>
<div class="a" style="left:554px;top:34px;width:8px;height:458px;background:#eeeeee"></div>
<div class="a" style="left:554.500px;top:259px;width:7px;height:222px;background:#a9aeb4;border-radius:3.500px"></div>
</div>
<div class="a" style="left:1319px;top:756px;width:586px;height:4px;background:#eeeeee"></div>
<div class="a" style="left:1602px;top:756px;width:20px;height:4px;background:#a9aeb4"></div>
<div class="box" style="left:1319px;top:760px;width:586px;height:90px;background:#fff"></div>
<div class="t" style="left:1329.0px;top:766px;font-size:16px;letter-spacing:0.127px;">Username</div>
<div class="box" style="left:1330px;top:799px;width:564px;height:45px;background:#f7f8fa"></div>
<div class="t" style="left:1343.8px;top:808px;letter-spacing:0.553px;">phorger</div>
<div class="a" style="left:1331px;top:800px;width:92px;height:41px;border:3px solid #e21b23"></div>
</body></html>
